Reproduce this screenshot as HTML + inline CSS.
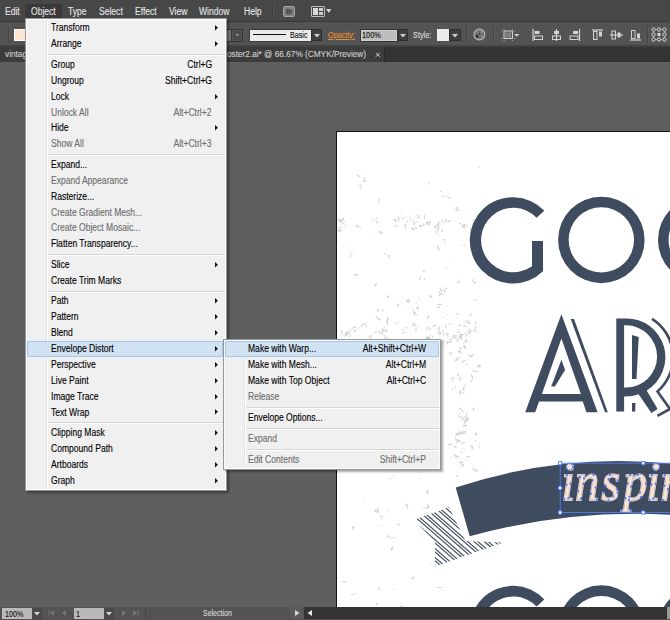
<!DOCTYPE html><html><head><meta charset="utf-8"><style>
html,body{margin:0;padding:0;width:670px;height:620px;overflow:hidden;background:#5f5f5f}
body{position:relative;font-family:"Liberation Sans",sans-serif}
.t{position:absolute;white-space:nowrap}
.m{transform:scaleX(0.855);transform-origin:0 0;-webkit-text-stroke:0.12px currentColor}
.mr{transform-origin:100% 0}
.w{transform:scaleX(0.88)}
</style></head><body>
<div style="position:absolute;left:0;top:0;width:670px;height:21px;background:#474747"></div>
<div style="position:absolute;left:0;top:21px;width:670px;height:1px;background:#383838"></div>
<div style="position:absolute;left:0;top:22px;width:670px;height:24px;background:#535353"></div>
<div style="position:absolute;left:0;top:45px;width:670px;height:2px;background:#424242"></div>
<div style="position:absolute;left:0;top:47px;width:670px;height:15px;background:#333333"></div>
<div style="position:absolute;left:0;top:47px;width:384px;height:15px;background:#3c3c3c;border-right:1px solid #2a2a2a"></div>
<div style="position:absolute;left:0;top:62px;width:670px;height:545px;background:#5f5f5f"></div>
<div style="position:absolute;left:25px;top:4px;width:37px;height:14px;background:#393939;border-radius:2px"></div>
<div class="t m" style="left:4.6px;top:3.73px;font-size:10.0px;line-height:16px;color:#e4e4e4;">Edit</div>
<div class="t m" style="left:31px;top:3.73px;font-size:10.0px;line-height:16px;color:#e4e4e4;">Object</div>
<div class="t m" style="left:68.4px;top:3.73px;font-size:10.0px;line-height:16px;color:#e4e4e4;">Type</div>
<div class="t m" style="left:99.3px;top:3.73px;font-size:10.0px;line-height:16px;color:#e4e4e4;">Select</div>
<div class="t m" style="left:134.8px;top:3.73px;font-size:10.0px;line-height:16px;color:#e4e4e4;">Effect</div>
<div class="t m" style="left:168.6px;top:3.73px;font-size:10.0px;line-height:16px;color:#e4e4e4;">View</div>
<div class="t m" style="left:199.4px;top:3.73px;font-size:10.0px;line-height:16px;color:#e4e4e4;">Window</div>
<div class="t m" style="left:243.7px;top:3.73px;font-size:10.0px;line-height:16px;color:#e4e4e4;">Help</div>
<div style="position:absolute;left:272px;top:4px;width:1px;height:14px;background:#3a3a3a;border-right:1px solid #555"></div>
<div style="position:absolute;left:283px;top:5.5px;width:12px;height:11.5px;background:#808080;border:1px solid #a5a5a5;box-sizing:border-box;border-radius:1.5px"></div>
<div class="t m" style="left:285.6px;top:3.64px;font-size:7.4px;line-height:16px;color:#262626;">Br</div>
<div style="position:absolute;left:311px;top:6px;width:14px;height:11px;border:1px solid #bdbdbd;box-sizing:border-box;background:#4a4a4a;border-radius:1px"></div>
<div style="position:absolute;left:313px;top:8px;width:5px;height:7px;background:#d9d9d9"></div>
<div style="position:absolute;left:319px;top:8px;width:4px;height:3px;background:#cfcfcf"></div>
<div style="position:absolute;left:319px;top:12px;width:4px;height:3px;background:#cfcfcf"></div>
<svg style="position:absolute;left:325.7px;top:8.5px" width="6" height="5"><path d="M0 0H5.4L2.7 4Z" fill="#d6d6d6"/></svg>
<div style="position:absolute;left:8px;top:26px;width:1px;height:17px;background:#444;border-right:1px solid #5c5c5c"></div>
<div style="position:absolute;left:14px;top:29px;width:12px;height:12px;background:#fde5d2;box-shadow:0 0 0 1px #fff inset"></div>
<div style="position:absolute;left:226px;top:28.5px;width:17px;height:13px;background:#333"></div>
<div style="position:absolute;left:226px;top:29.5px;width:5px;height:11px;background:#787878"></div>
<div style="position:absolute;left:231.5px;top:29.5px;width:10.5px;height:11px;background:#494949;border:1px solid #555;box-sizing:border-box"></div>
<svg style="position:absolute;left:234.5px;top:33.5px" width="6" height="4"><path d="M0 0H4.6L2.3 2.6Z" fill="#8a8a8a"/></svg>
<div style="position:absolute;left:248.5px;top:28.5px;width:63px;height:13px;background:#ebebeb;border:1px solid #3a3a3a;box-sizing:border-box"></div>
<div style="position:absolute;left:253px;top:34.2px;width:33px;height:1.3px;background:#111"></div>
<div class="t m" style="left:289.6px;top:27.09px;font-size:8.4px;line-height:16px;color:#111;">Basic</div>
<div style="position:absolute;left:311px;top:29px;width:11px;height:12px;background:#3f3f3f;border:1px solid #2f2f2f;box-sizing:border-box"></div>
<svg style="position:absolute;left:313.5px;top:33.5px" width="6" height="4"><path d="M0 0H6L3 3.5Z" fill="#d0d0d0"/></svg>
<div class="t m" style="left:328.4px;top:26.72px;font-size:8.6px;line-height:16px;color:#e8913a;text-decoration:underline">Opacity:</div>
<div style="position:absolute;left:359.5px;top:28.5px;width:38.5px;height:13px;background:#bdbdbd;border:1px solid #333;box-shadow:inset 0 0 0 1px #d0d0d0;box-sizing:border-box"></div>
<div class="t m" style="left:362px;top:26.82px;font-size:8.6px;line-height:16px;color:#111;">100%</div>
<div style="position:absolute;left:398px;top:29px;width:10px;height:12px;background:#3f3f3f;border:1px solid #2f2f2f;box-sizing:border-box"></div>
<svg style="position:absolute;left:400px;top:33.5px" width="6" height="4"><path d="M0 0H6L3 3.5Z" fill="#d0d0d0"/></svg>
<div class="t m" style="left:413px;top:26.72px;font-size:8.6px;line-height:16px;color:#d8d8d8;">Style:</div>
<div style="position:absolute;left:436.5px;top:29px;width:12.5px;height:12px;background:#ececec"></div>
<div style="position:absolute;left:449px;top:29px;width:11.5px;height:12px;background:#3f3f3f;border:1px solid #2f2f2f;box-sizing:border-box"></div>
<svg style="position:absolute;left:452px;top:33.5px" width="6" height="4"><path d="M0 0H6L3 3.5Z" fill="#d0d0d0"/></svg>
<div style="position:absolute;left:466px;top:26px;width:1px;height:17px;background:#444;border-right:1px solid #5c5c5c"></div>
<svg style="position:absolute;left:472px;top:28px" width="15" height="14"><circle cx="7.4" cy="6.5" r="5.4" fill="#707070" stroke="#bdbdbd" stroke-width="1.1"/><circle cx="5" cy="8.3" r="1.4" fill="#222"/><circle cx="7.6" cy="5.8" r="0.7" fill="#111"/><circle cx="9.5" cy="4" r="1" fill="#9a9a9a"/><circle cx="5" cy="4" r="0.8" fill="#9a9a9a"/><circle cx="10" cy="8.5" r="0.9" fill="#9a9a9a"/></svg>
<div style="position:absolute;left:493px;top:26px;width:1px;height:17px;background:#444;border-right:1px solid #5c5c5c"></div>
<svg style="position:absolute;left:501px;top:28px" width="20" height="14"><rect x="3" y="3" width="8.5" height="7.5" fill="#5a5a5a" stroke="#cfcfcf" stroke-width="1"/><rect x="4.5" y="4.5" width="2" height="2" fill="#999"/><rect x="8" y="4.5" width="2" height="2" fill="#999"/><rect x="4.5" y="7.5" width="2" height="2" fill="#999"/><rect x="8" y="7.5" width="2" height="2" fill="#999"/><rect x="6.3" y="6" width="2" height="2" fill="#888"/><circle cx="3" cy="1" r="0.6" fill="#aaa"/><circle cx="11.5" cy="1" r="0.6" fill="#aaa"/><circle cx="3" cy="12.5" r="0.6" fill="#aaa"/><circle cx="11.5" cy="12.5" r="0.6" fill="#aaa"/><circle cx="1" cy="3" r="0.6" fill="#aaa"/><circle cx="13.5" cy="3" r="0.6" fill="#aaa"/><circle cx="1" cy="10.5" r="0.6" fill="#aaa"/><circle cx="13.5" cy="10.5" r="0.6" fill="#aaa"/><path d="M13 6H18.4L15.7 8.8Z" fill="#d0d0d0"/></svg>
<svg style="position:absolute;left:531.5px;top:28.5px" width="12" height="12"><path d="M1 0V12" stroke="#d4d4d4" stroke-width="1.2"/><rect x="2.5" y="2" width="5" height="3" fill="#d4d4d4"/><rect x="2.5" y="7" width="8" height="3.5" fill="none" stroke="#d4d4d4"/></svg>
<svg style="position:absolute;left:550.5px;top:28.5px" width="12" height="12"><path d="M5.5 0V12" stroke="#d4d4d4" stroke-width="1.2"/><rect x="3" y="2" width="5" height="3" fill="#d4d4d4"/><rect x="1.5" y="7" width="8" height="3.5" fill="none" stroke="#d4d4d4"/></svg>
<svg style="position:absolute;left:568.5px;top:28.5px" width="12" height="12"><path d="M10.5 0V12" stroke="#d4d4d4" stroke-width="1.2"/><rect x="4" y="2" width="5" height="3" fill="#d4d4d4"/><rect x="1" y="7" width="8" height="3.5" fill="none" stroke="#d4d4d4"/></svg>
<svg style="position:absolute;left:592px;top:28.5px" width="12" height="12"><path d="M0 1H11" stroke="#d4d4d4" stroke-width="1.2"/><rect x="1.5" y="2.5" width="3.5" height="8" fill="none" stroke="#d4d4d4"/><rect x="7" y="2.5" width="3" height="5" fill="#d4d4d4"/></svg>
<svg style="position:absolute;left:610px;top:28.5px" width="13" height="12"><path d="M0 6H13" stroke="#d4d4d4" stroke-width="1.2"/><rect x="2" y="2" width="3.5" height="8" fill="none" stroke="#d4d4d4"/><rect x="7.5" y="3.5" width="3" height="5" fill="#d4d4d4"/></svg>
<svg style="position:absolute;left:629.5px;top:28.5px" width="12" height="12"><path d="M0 11H11" stroke="#d4d4d4" stroke-width="1.2"/><rect x="1.5" y="1.5" width="3.5" height="8" fill="none" stroke="#d4d4d4"/><rect x="7" y="4.5" width="3" height="5" fill="#d4d4d4"/></svg>
<div style="position:absolute;left:647px;top:26px;width:1px;height:17px;background:#444;border-right:1px solid #5c5c5c"></div>
<svg style="position:absolute;left:651px;top:27px" width="17" height="15"><rect x="2.5" y="2.5" width="11" height="10" fill="none" stroke="#9a9a9a" stroke-width="1"/><circle cx="2.5" cy="2.5" r="1.7" fill="#555" stroke="#d4d4d4" stroke-width="1"/><circle cx="2.5" cy="7.5" r="1.7" fill="#555" stroke="#d4d4d4" stroke-width="1"/><circle cx="2.5" cy="12.5" r="1.7" fill="#555" stroke="#d4d4d4" stroke-width="1"/><circle cx="8" cy="2.5" r="1.7" fill="#555" stroke="#d4d4d4" stroke-width="1"/><rect x="6.5" y="6" width="3" height="3" fill="#d8d8d8"/><circle cx="8" cy="12.5" r="1.7" fill="#555" stroke="#d4d4d4" stroke-width="1"/><circle cx="13.5" cy="2.5" r="1.7" fill="#555" stroke="#d4d4d4" stroke-width="1"/><circle cx="13.5" cy="7.5" r="1.7" fill="#555" stroke="#d4d4d4" stroke-width="1"/><circle cx="13.5" cy="12.5" r="1.7" fill="#555" stroke="#d4d4d4" stroke-width="1"/></svg>
<div class="t m w" style="left:4.6px;top:46.24px;font-size:9.4px;line-height:16px;color:#d0d0d0;">vintage</div>
<div class="t m mr w" style="right:303.5px;top:46.24px;font-size:9.4px;line-height:16px;color:#d0d0d0;">oster2.ai* @ 66.67% (CMYK/Preview)</div>
<svg style="position:absolute;left:374.5px;top:52px" width="6" height="6"><path d="M0.8 0.8L4.8 4.8M4.8 0.8L0.8 4.8" stroke="#d0d0d0" stroke-width="1.0"/></svg>
<div style="position:absolute;left:336px;top:131px;width:334px;height:476px;background:#fff;border-left:1px solid #111;border-top:1px solid #111;box-sizing:border-box;overflow:hidden">
<svg style="position:absolute;left:-337px;top:-132px" width="670" height="620" viewBox="0 0 670 620"><defs><pattern id="hatch" patternUnits="userSpaceOnUse" width="7.7" height="7.7" patternTransform="rotate(40)"><rect x="0" y="0" width="7.7" height="1.0" fill="#3f4b5e"/><rect x="0" y="3.2" width="7.7" height="1.0" fill="#3f4b5e"/></pattern></defs><g fill="#d0d0d0"><ellipse cx="427.9" cy="493.0" rx="2.0" ry="0.4" transform="rotate(110 427.9 493.0)"/><ellipse cx="427.4" cy="491.5" rx="1.5" ry="0.7" transform="rotate(124 427.4 491.5)"/><ellipse cx="427.5" cy="490.9" rx="1.5" ry="0.7" transform="rotate(100 427.5 490.9)"/><ellipse cx="474.6" cy="492.7" rx="1.2" ry="0.5" transform="rotate(172 474.6 492.7)"/><ellipse cx="474.1" cy="494.1" rx="0.7" ry="0.5" transform="rotate(52 474.1 494.1)"/><ellipse cx="474.1" cy="494.1" rx="1.5" ry="0.7" transform="rotate(155 474.1 494.1)"/><ellipse cx="342.6" cy="372.0" rx="0.5" ry="0.5" transform="rotate(167 342.6 372.0)"/><ellipse cx="430.9" cy="563.2" rx="0.5" ry="0.7" transform="rotate(173 430.9 563.2)"/><ellipse cx="392.0" cy="548.5" rx="2.5" ry="0.7" transform="rotate(109 392.0 548.5)"/><ellipse cx="393.0" cy="547.6" rx="0.5" ry="0.4" transform="rotate(43 393.0 547.6)"/><ellipse cx="415.6" cy="420.2" rx="1.2" ry="0.4" transform="rotate(121 415.6 420.2)"/><ellipse cx="443.0" cy="344.0" rx="1.5" ry="0.4" transform="rotate(164 443.0 344.0)"/><ellipse cx="471.8" cy="502.6" rx="0.5" ry="0.7" transform="rotate(160 471.8 502.6)"/><ellipse cx="446.7" cy="195.5" rx="0.7" ry="0.4" transform="rotate(38 446.7 195.5)"/><ellipse cx="443.5" cy="196.5" rx="1.5" ry="0.4" transform="rotate(162 443.5 196.5)"/><ellipse cx="448.9" cy="197.6" rx="2.5" ry="0.4" transform="rotate(40 448.9 197.6)"/><ellipse cx="428.9" cy="222.4" rx="2.5" ry="0.7" transform="rotate(158 428.9 222.4)"/><ellipse cx="478.8" cy="167.2" rx="1.2" ry="0.5" transform="rotate(95 478.8 167.2)"/><ellipse cx="474.6" cy="239.1" rx="0.9" ry="0.4" transform="rotate(109 474.6 239.1)"/><ellipse cx="378.9" cy="590.7" rx="0.5" ry="0.4" transform="rotate(21 378.9 590.7)"/><ellipse cx="379.4" cy="588.5" rx="0.7" ry="0.5" transform="rotate(34 379.4 588.5)"/><ellipse cx="378.8" cy="588.5" rx="2.0" ry="0.5" transform="rotate(131 378.8 588.5)"/><ellipse cx="462.9" cy="442.9" rx="2.5" ry="0.7" transform="rotate(172 462.9 442.9)"/><ellipse cx="474.2" cy="469.3" rx="2.0" ry="0.5" transform="rotate(167 474.2 469.3)"/><ellipse cx="476.3" cy="470.5" rx="2.5" ry="0.5" transform="rotate(151 476.3 470.5)"/><ellipse cx="383.5" cy="326.4" rx="0.5" ry="0.4" transform="rotate(60 383.5 326.4)"/><ellipse cx="472.8" cy="280.2" rx="1.5" ry="0.5" transform="rotate(133 472.8 280.2)"/><ellipse cx="474.8" cy="282.5" rx="2.0" ry="0.7" transform="rotate(172 474.8 282.5)"/><ellipse cx="378.8" cy="429.4" rx="0.5" ry="0.5" transform="rotate(19 378.8 429.4)"/><ellipse cx="420.9" cy="478.5" rx="0.9" ry="0.4" transform="rotate(83 420.9 478.5)"/><ellipse cx="383.1" cy="525.9" rx="0.5" ry="0.4" transform="rotate(73 383.1 525.9)"/><ellipse cx="380.2" cy="525.7" rx="0.5" ry="0.7" transform="rotate(173 380.2 525.7)"/><ellipse cx="437.9" cy="246.7" rx="1.2" ry="0.5" transform="rotate(170 437.9 246.7)"/><ellipse cx="438.4" cy="248.5" rx="2.0" ry="0.7" transform="rotate(53 438.4 248.5)"/><ellipse cx="440.7" cy="191.2" rx="0.9" ry="0.7" transform="rotate(35 440.7 191.2)"/><ellipse cx="475.9" cy="322.7" rx="1.2" ry="0.7" transform="rotate(125 475.9 322.7)"/><ellipse cx="475.4" cy="323.5" rx="0.9" ry="0.5" transform="rotate(61 475.4 323.5)"/><ellipse cx="338.6" cy="514.0" rx="0.5" ry="0.4" transform="rotate(76 338.6 514.0)"/><ellipse cx="339.0" cy="513.3" rx="0.5" ry="0.4" transform="rotate(49 339.0 513.3)"/><ellipse cx="394.6" cy="538.0" rx="0.7" ry="0.7" transform="rotate(152 394.6 538.0)"/><ellipse cx="393.2" cy="537.4" rx="1.2" ry="0.5" transform="rotate(23 393.2 537.4)"/><ellipse cx="343.8" cy="246.9" rx="0.7" ry="0.5" transform="rotate(146 343.8 246.9)"/><ellipse cx="356.6" cy="275.3" rx="1.2" ry="0.7" transform="rotate(14 356.6 275.3)"/><ellipse cx="355.4" cy="274.5" rx="2.5" ry="0.5" transform="rotate(2 355.4 274.5)"/><ellipse cx="387.4" cy="318.8" rx="1.5" ry="0.7" transform="rotate(85 387.4 318.8)"/><ellipse cx="387.1" cy="322.5" rx="2.5" ry="0.7" transform="rotate(78 387.1 322.5)"/><ellipse cx="387.7" cy="319.7" rx="2.0" ry="0.7" transform="rotate(114 387.7 319.7)"/><ellipse cx="372.2" cy="369.8" rx="2.5" ry="0.7" transform="rotate(74 372.2 369.8)"/><ellipse cx="374.2" cy="371.2" rx="1.2" ry="0.4" transform="rotate(180 374.2 371.2)"/><ellipse cx="372.0" cy="369.7" rx="0.7" ry="0.5" transform="rotate(141 372.0 369.7)"/><ellipse cx="442.4" cy="514.5" rx="0.9" ry="0.4" transform="rotate(71 442.4 514.5)"/><ellipse cx="447.8" cy="517.6" rx="0.9" ry="0.5" transform="rotate(0 447.8 517.6)"/><ellipse cx="344.1" cy="581.7" rx="2.5" ry="0.5" transform="rotate(14 344.1 581.7)"/><ellipse cx="366.0" cy="391.6" rx="1.2" ry="0.4" transform="rotate(35 366.0 391.6)"/><ellipse cx="367.6" cy="393.9" rx="0.9" ry="0.7" transform="rotate(82 367.6 393.9)"/><ellipse cx="470.6" cy="314.8" rx="0.9" ry="0.7" transform="rotate(6 470.6 314.8)"/><ellipse cx="470.3" cy="315.8" rx="0.9" ry="0.4" transform="rotate(136 470.3 315.8)"/><ellipse cx="471.8" cy="313.8" rx="0.7" ry="0.5" transform="rotate(93 471.8 313.8)"/><ellipse cx="418.5" cy="304.9" rx="0.5" ry="0.5" transform="rotate(20 418.5 304.9)"/><ellipse cx="416.1" cy="302.4" rx="0.9" ry="0.5" transform="rotate(99 416.1 302.4)"/><ellipse cx="380.9" cy="515.8" rx="1.5" ry="0.4" transform="rotate(47 380.9 515.8)"/><ellipse cx="383.2" cy="516.2" rx="0.7" ry="0.4" transform="rotate(87 383.2 516.2)"/><ellipse cx="381.4" cy="518.0" rx="2.5" ry="0.4" transform="rotate(75 381.4 518.0)"/><ellipse cx="359.2" cy="468.0" rx="2.5" ry="0.5" transform="rotate(10 359.2 468.0)"/><ellipse cx="359.4" cy="469.3" rx="1.2" ry="0.5" transform="rotate(140 359.4 469.3)"/><ellipse cx="361.3" cy="185.3" rx="0.5" ry="0.7" transform="rotate(22 361.3 185.3)"/><ellipse cx="360.6" cy="187.8" rx="0.9" ry="0.7" transform="rotate(105 360.6 187.8)"/><ellipse cx="360.1" cy="185.5" rx="1.2" ry="0.5" transform="rotate(152 360.1 185.5)"/><ellipse cx="413.9" cy="342.9" rx="2.0" ry="0.5" transform="rotate(10 413.9 342.9)"/><ellipse cx="443.3" cy="317.4" rx="0.5" ry="0.7" transform="rotate(54 443.3 317.4)"/><ellipse cx="446.8" cy="314.8" rx="0.7" ry="0.5" transform="rotate(63 446.8 314.8)"/><ellipse cx="402.7" cy="349.9" rx="0.7" ry="0.7" transform="rotate(82 402.7 349.9)"/><ellipse cx="479.1" cy="447.6" rx="0.9" ry="0.4" transform="rotate(67 479.1 447.6)"/><ellipse cx="479.2" cy="445.9" rx="1.2" ry="0.4" transform="rotate(133 479.2 445.9)"/><ellipse cx="388.6" cy="256.3" rx="2.0" ry="0.5" transform="rotate(70 388.6 256.3)"/><ellipse cx="389.1" cy="255.9" rx="0.9" ry="0.7" transform="rotate(158 389.1 255.9)"/><ellipse cx="385.3" cy="254.1" rx="0.7" ry="0.7" transform="rotate(25 385.3 254.1)"/><ellipse cx="420.5" cy="225.6" rx="1.5" ry="0.4" transform="rotate(2 420.5 225.6)"/><ellipse cx="420.1" cy="225.8" rx="1.2" ry="0.7" transform="rotate(157 420.1 225.8)"/><ellipse cx="354.2" cy="358.6" rx="0.5" ry="0.5" transform="rotate(130 354.2 358.6)"/><ellipse cx="347.0" cy="349.7" rx="0.7" ry="0.7" transform="rotate(171 347.0 349.7)"/><ellipse cx="401.8" cy="607.0" rx="2.0" ry="0.7" transform="rotate(17 401.8 607.0)"/><ellipse cx="478.9" cy="366.7" rx="2.0" ry="0.7" transform="rotate(161 478.9 366.7)"/><ellipse cx="479.3" cy="365.4" rx="2.0" ry="0.7" transform="rotate(152 479.3 365.4)"/><ellipse cx="436.6" cy="306.9" rx="0.9" ry="0.5" transform="rotate(54 436.6 306.9)"/><ellipse cx="439.0" cy="307.4" rx="1.5" ry="0.7" transform="rotate(162 439.0 307.4)"/><ellipse cx="379.9" cy="342.8" rx="0.7" ry="0.5" transform="rotate(57 379.9 342.8)"/><ellipse cx="354.4" cy="527.3" rx="0.7" ry="0.5" transform="rotate(179 354.4 527.3)"/><ellipse cx="353.1" cy="527.5" rx="1.5" ry="0.7" transform="rotate(71 353.1 527.5)"/><ellipse cx="352.9" cy="529.2" rx="0.7" ry="0.7" transform="rotate(90 352.9 529.2)"/><ellipse cx="479.6" cy="443.1" rx="0.5" ry="0.4" transform="rotate(78 479.6 443.1)"/><ellipse cx="475.6" cy="440.8" rx="0.7" ry="0.7" transform="rotate(43 475.6 440.8)"/><ellipse cx="462.2" cy="245.4" rx="0.9" ry="0.5" transform="rotate(53 462.2 245.4)"/><ellipse cx="464.7" cy="245.3" rx="0.9" ry="0.7" transform="rotate(48 464.7 245.3)"/><ellipse cx="378.0" cy="509.5" rx="2.5" ry="0.4" transform="rotate(124 378.0 509.5)"/><ellipse cx="375.6" cy="511.1" rx="2.5" ry="0.7" transform="rotate(51 375.6 511.1)"/><ellipse cx="377.7" cy="510.7" rx="2.5" ry="0.7" transform="rotate(69 377.7 510.7)"/><ellipse cx="389.0" cy="511.2" rx="0.9" ry="0.4" transform="rotate(74 389.0 511.2)"/><ellipse cx="388.1" cy="512.2" rx="0.5" ry="0.5" transform="rotate(129 388.1 512.2)"/><ellipse cx="438.7" cy="456.4" rx="0.5" ry="0.4" transform="rotate(54 438.7 456.4)"/><ellipse cx="439.7" cy="459.7" rx="2.5" ry="0.7" transform="rotate(161 439.7 459.7)"/><ellipse cx="393.8" cy="475.8" rx="1.2" ry="0.4" transform="rotate(41 393.8 475.8)"/><ellipse cx="390.3" cy="477.9" rx="0.9" ry="0.7" transform="rotate(19 390.3 477.9)"/><ellipse cx="458.6" cy="279.3" rx="0.5" ry="0.5" transform="rotate(68 458.6 279.3)"/><ellipse cx="458.0" cy="282.5" rx="1.5" ry="0.7" transform="rotate(17 458.0 282.5)"/><ellipse cx="459.3" cy="281.1" rx="1.2" ry="0.5" transform="rotate(21 459.3 281.1)"/><ellipse cx="439.2" cy="587.5" rx="2.5" ry="0.5" transform="rotate(7 439.2 587.5)"/><ellipse cx="442.8" cy="590.4" rx="0.7" ry="0.5" transform="rotate(118 442.8 590.4)"/><ellipse cx="428.5" cy="422.0" rx="2.5" ry="0.7" transform="rotate(95 428.5 422.0)"/><ellipse cx="407.2" cy="507.2" rx="2.0" ry="0.5" transform="rotate(55 407.2 507.2)"/><ellipse cx="406.7" cy="505.0" rx="2.0" ry="0.7" transform="rotate(46 406.7 505.0)"/><ellipse cx="433.8" cy="370.5" rx="1.2" ry="0.5" transform="rotate(73 433.8 370.5)"/><ellipse cx="436.7" cy="369.5" rx="1.5" ry="0.4" transform="rotate(82 436.7 369.5)"/><ellipse cx="434.0" cy="371.6" rx="1.2" ry="0.4" transform="rotate(24 434.0 371.6)"/><ellipse cx="430.4" cy="517.8" rx="1.2" ry="0.5" transform="rotate(112 430.4 517.8)"/><ellipse cx="431.8" cy="518.0" rx="2.0" ry="0.5" transform="rotate(19 431.8 518.0)"/><ellipse cx="376.7" cy="316.9" rx="0.9" ry="0.7" transform="rotate(9 376.7 316.9)"/><ellipse cx="376.8" cy="317.6" rx="2.5" ry="0.4" transform="rotate(61 376.8 317.6)"/><ellipse cx="387.6" cy="536.1" rx="1.2" ry="0.7" transform="rotate(166 387.6 536.1)"/><ellipse cx="387.2" cy="537.3" rx="0.9" ry="0.4" transform="rotate(94 387.2 537.3)"/><ellipse cx="389.8" cy="537.2" rx="2.5" ry="0.4" transform="rotate(52 389.8 537.2)"/><ellipse cx="404.2" cy="327.0" rx="0.5" ry="0.4" transform="rotate(88 404.2 327.0)"/><ellipse cx="406.5" cy="327.7" rx="1.2" ry="0.7" transform="rotate(51 406.5 327.7)"/><ellipse cx="416.1" cy="399.7" rx="1.2" ry="0.5" transform="rotate(165 416.1 399.7)"/><ellipse cx="364.7" cy="324.0" rx="2.0" ry="0.7" transform="rotate(142 364.7 324.0)"/><ellipse cx="366.4" cy="326.6" rx="2.0" ry="0.4" transform="rotate(97 366.4 326.6)"/><ellipse cx="378.9" cy="198.5" rx="0.9" ry="0.4" transform="rotate(41 378.9 198.5)"/><ellipse cx="378.9" cy="203.0" rx="2.0" ry="0.4" transform="rotate(30 378.9 203.0)"/><ellipse cx="378.8" cy="200.5" rx="2.0" ry="0.5" transform="rotate(117 378.8 200.5)"/><ellipse cx="444.8" cy="239.7" rx="0.7" ry="0.7" transform="rotate(49 444.8 239.7)"/><ellipse cx="444.7" cy="242.7" rx="1.5" ry="0.4" transform="rotate(134 444.7 242.7)"/><ellipse cx="443.3" cy="239.7" rx="0.9" ry="0.4" transform="rotate(132 443.3 239.7)"/><ellipse cx="412.3" cy="577.8" rx="2.5" ry="0.5" transform="rotate(141 412.3 577.8)"/><ellipse cx="413.9" cy="578.5" rx="1.5" ry="0.4" transform="rotate(27 413.9 578.5)"/><ellipse cx="424.5" cy="507.6" rx="2.5" ry="0.4" transform="rotate(19 424.5 507.6)"/><ellipse cx="427.9" cy="506.2" rx="2.5" ry="0.5" transform="rotate(86 427.9 506.2)"/><ellipse cx="428.3" cy="507.2" rx="2.5" ry="0.7" transform="rotate(138 428.3 507.2)"/><ellipse cx="376.9" cy="603.6" rx="1.5" ry="0.7" transform="rotate(129 376.9 603.6)"/><ellipse cx="358.9" cy="360.9" rx="0.5" ry="0.7" transform="rotate(159 358.9 360.9)"/><ellipse cx="359.3" cy="360.8" rx="0.5" ry="0.7" transform="rotate(61 359.3 360.8)"/><ellipse cx="361.0" cy="360.9" rx="0.5" ry="0.4" transform="rotate(40 361.0 360.9)"/><ellipse cx="364.9" cy="501.7" rx="0.9" ry="0.4" transform="rotate(131 364.9 501.7)"/><ellipse cx="428.9" cy="182.9" rx="0.5" ry="0.5" transform="rotate(124 428.9 182.9)"/><ellipse cx="429.5" cy="183.8" rx="1.2" ry="0.4" transform="rotate(74 429.5 183.8)"/><ellipse cx="480.7" cy="239.6" rx="2.5" ry="0.4" transform="rotate(125 480.7 239.6)"/><ellipse cx="354.2" cy="594.0" rx="2.5" ry="0.4" transform="rotate(157 354.2 594.0)"/><ellipse cx="352.1" cy="594.7" rx="1.2" ry="0.7" transform="rotate(162 352.1 594.7)"/><ellipse cx="364.4" cy="178.7" rx="2.0" ry="0.5" transform="rotate(132 364.4 178.7)"/><ellipse cx="364.7" cy="181.2" rx="2.0" ry="0.7" transform="rotate(156 364.7 181.2)"/><ellipse cx="390.6" cy="460.0" rx="2.5" ry="0.4" transform="rotate(66 390.6 460.0)"/><ellipse cx="423.8" cy="271.5" rx="0.9" ry="0.4" transform="rotate(113 423.8 271.5)"/><ellipse cx="424.2" cy="270.8" rx="2.0" ry="0.5" transform="rotate(171 424.2 270.8)"/><ellipse cx="339.9" cy="344.1" rx="1.2" ry="0.5" transform="rotate(131 339.9 344.1)"/><ellipse cx="335.6" cy="345.2" rx="0.9" ry="0.4" transform="rotate(178 335.6 345.2)"/><ellipse cx="460.0" cy="547.8" rx="1.2" ry="0.5" transform="rotate(145 460.0 547.8)"/><ellipse cx="459.7" cy="545.4" rx="1.5" ry="0.7" transform="rotate(74 459.7 545.4)"/><ellipse cx="462.3" cy="546.7" rx="2.5" ry="0.4" transform="rotate(41 462.3 546.7)"/><ellipse cx="459.0" cy="329.6" rx="0.5" ry="0.7" transform="rotate(87 459.0 329.6)"/><ellipse cx="420.0" cy="299.7" rx="0.9" ry="0.4" transform="rotate(15 420.0 299.7)"/><ellipse cx="418.4" cy="297.9" rx="0.9" ry="0.4" transform="rotate(56 418.4 297.9)"/><ellipse cx="417.4" cy="314.7" rx="1.5" ry="0.4" transform="rotate(138 417.4 314.7)"/><ellipse cx="415.8" cy="316.3" rx="0.5" ry="0.4" transform="rotate(88 415.8 316.3)"/><ellipse cx="414.8" cy="315.6" rx="0.9" ry="0.4" transform="rotate(76 414.8 315.6)"/><ellipse cx="379.5" cy="319.2" rx="2.0" ry="0.7" transform="rotate(44 379.5 319.2)"/><ellipse cx="397.0" cy="524.2" rx="0.9" ry="0.4" transform="rotate(168 397.0 524.2)"/><ellipse cx="399.0" cy="524.2" rx="0.9" ry="0.7" transform="rotate(170 399.0 524.2)"/><ellipse cx="399.0" cy="525.3" rx="0.7" ry="0.5" transform="rotate(123 399.0 525.3)"/><ellipse cx="416.3" cy="371.1" rx="2.5" ry="0.5" transform="rotate(59 416.3 371.1)"/><ellipse cx="424.0" cy="413.7" rx="2.5" ry="0.4" transform="rotate(107 424.0 413.7)"/><ellipse cx="475.8" cy="434.8" rx="1.2" ry="0.7" transform="rotate(95 475.8 434.8)"/><ellipse cx="476.5" cy="433.5" rx="1.5" ry="0.7" transform="rotate(159 476.5 433.5)"/><ellipse cx="456.2" cy="456.8" rx="2.0" ry="0.5" transform="rotate(168 456.2 456.8)"/><ellipse cx="456.8" cy="457.8" rx="0.9" ry="0.4" transform="rotate(55 456.8 457.8)"/><ellipse cx="353.9" cy="414.0" rx="1.5" ry="0.4" transform="rotate(32 353.9 414.0)"/><ellipse cx="355.2" cy="413.2" rx="0.5" ry="0.7" transform="rotate(20 355.2 413.2)"/><ellipse cx="354.4" cy="415.2" rx="0.5" ry="0.4" transform="rotate(53 354.4 415.2)"/><ellipse cx="412.2" cy="308.5" rx="0.7" ry="0.4" transform="rotate(78 412.2 308.5)"/><ellipse cx="417.3" cy="308.3" rx="1.5" ry="0.7" transform="rotate(179 417.3 308.3)"/><ellipse cx="418.0" cy="307.7" rx="1.2" ry="0.7" transform="rotate(83 418.0 307.7)"/><ellipse cx="391.5" cy="356.9" rx="0.9" ry="0.7" transform="rotate(16 391.5 356.9)"/><ellipse cx="409.4" cy="376.1" rx="2.5" ry="0.5" transform="rotate(170 409.4 376.1)"/><ellipse cx="409.5" cy="378.1" rx="2.5" ry="0.5" transform="rotate(179 409.5 378.1)"/><ellipse cx="408.5" cy="378.3" rx="2.0" ry="0.7" transform="rotate(82 408.5 378.3)"/><ellipse cx="394.6" cy="589.7" rx="1.2" ry="0.4" transform="rotate(168 394.6 589.7)"/><ellipse cx="424.8" cy="279.1" rx="1.5" ry="0.4" transform="rotate(79 424.8 279.1)"/><ellipse cx="424.5" cy="278.8" rx="0.9" ry="0.5" transform="rotate(6 424.5 278.8)"/><ellipse cx="408.3" cy="349.4" rx="0.7" ry="0.7" transform="rotate(90 408.3 349.4)"/><ellipse cx="407.3" cy="347.4" rx="0.5" ry="0.7" transform="rotate(55 407.3 347.4)"/><ellipse cx="473.2" cy="300.0" rx="0.7" ry="0.4" transform="rotate(8 473.2 300.0)"/><ellipse cx="476.0" cy="300.0" rx="1.5" ry="0.4" transform="rotate(8 476.0 300.0)"/><ellipse cx="358.6" cy="176.1" rx="2.5" ry="0.5" transform="rotate(40 358.6 176.1)"/><ellipse cx="363.4" cy="175.2" rx="0.5" ry="0.4" transform="rotate(20 363.4 175.2)"/><ellipse cx="358.7" cy="175.3" rx="0.5" ry="0.7" transform="rotate(20 358.7 175.3)"/><ellipse cx="426.8" cy="363.0" rx="2.5" ry="0.5" transform="rotate(141 426.8 363.0)"/><ellipse cx="427.4" cy="361.0" rx="0.9" ry="0.5" transform="rotate(12 427.4 361.0)"/><ellipse cx="344.7" cy="226.2" rx="1.2" ry="0.4" transform="rotate(138 344.7 226.2)"/><ellipse cx="346.0" cy="224.4" rx="0.5" ry="0.7" transform="rotate(134 346.0 224.4)"/><ellipse cx="340.1" cy="400.5" rx="0.7" ry="0.5" transform="rotate(120 340.1 400.5)"/><ellipse cx="336.1" cy="401.5" rx="2.0" ry="0.5" transform="rotate(1 336.1 401.5)"/><ellipse cx="374.1" cy="375.8" rx="0.7" ry="0.5" transform="rotate(66 374.1 375.8)"/><ellipse cx="375.5" cy="284.7" rx="2.5" ry="0.7" transform="rotate(134 375.5 284.7)"/><ellipse cx="441.4" cy="290.4" rx="1.2" ry="0.5" transform="rotate(57 441.4 290.4)"/><ellipse cx="441.1" cy="289.7" rx="2.5" ry="0.7" transform="rotate(53 441.1 289.7)"/><ellipse cx="423.2" cy="374.9" rx="1.5" ry="0.4" transform="rotate(41 423.2 374.9)"/><ellipse cx="425.7" cy="375.8" rx="0.7" ry="0.4" transform="rotate(37 425.7 375.8)"/><ellipse cx="425.6" cy="374.0" rx="0.9" ry="0.7" transform="rotate(25 425.6 374.0)"/><ellipse cx="460.5" cy="554.3" rx="1.5" ry="0.7" transform="rotate(111 460.5 554.3)"/><ellipse cx="339.4" cy="221.6" rx="0.7" ry="0.5" transform="rotate(113 339.4 221.6)"/><ellipse cx="338.5" cy="220.5" rx="0.7" ry="0.7" transform="rotate(84 338.5 220.5)"/><ellipse cx="414.2" cy="313.1" rx="2.0" ry="0.7" transform="rotate(62 414.2 313.1)"/><ellipse cx="414.6" cy="312.1" rx="2.5" ry="0.4" transform="rotate(54 414.6 312.1)"/><ellipse cx="439.2" cy="226.0" rx="2.0" ry="0.5" transform="rotate(68 439.2 226.0)"/><ellipse cx="438.1" cy="228.7" rx="1.5" ry="0.7" transform="rotate(61 438.1 228.7)"/><ellipse cx="436.3" cy="228.0" rx="2.0" ry="0.4" transform="rotate(133 436.3 228.0)"/><ellipse cx="344.9" cy="221.2" rx="1.2" ry="0.4" transform="rotate(53 344.9 221.2)"/><ellipse cx="341.1" cy="223.9" rx="0.7" ry="0.5" transform="rotate(72 341.1 223.9)"/><ellipse cx="343.3" cy="223.3" rx="0.9" ry="0.5" transform="rotate(125 343.3 223.3)"/><ellipse cx="342.7" cy="222.8" rx="0.7" ry="0.5" transform="rotate(145 342.7 222.8)"/><ellipse cx="414.1" cy="219.3" rx="0.5" ry="0.5" transform="rotate(71 414.1 219.3)"/><ellipse cx="416.4" cy="222.1" rx="2.0" ry="0.5" transform="rotate(169 416.4 222.1)"/><ellipse cx="414.1" cy="224.2" rx="1.2" ry="0.7" transform="rotate(108 414.1 224.2)"/><ellipse cx="341.8" cy="220.0" rx="0.9" ry="0.5" transform="rotate(91 341.8 220.0)"/><ellipse cx="342.6" cy="219.9" rx="2.5" ry="0.7" transform="rotate(122 342.6 219.9)"/><ellipse cx="341.5" cy="220.0" rx="2.5" ry="0.7" transform="rotate(154 341.5 220.0)"/><ellipse cx="341.4" cy="220.7" rx="2.5" ry="0.7" transform="rotate(119 341.4 220.7)"/><ellipse cx="339.1" cy="218.7" rx="1.2" ry="0.5" transform="rotate(86 339.1 218.7)"/><ellipse cx="424.5" cy="216.9" rx="2.5" ry="0.5" transform="rotate(87 424.5 216.9)"/><ellipse cx="419.3" cy="214.8" rx="0.7" ry="0.4" transform="rotate(58 419.3 214.8)"/><ellipse cx="420.2" cy="215.8" rx="0.5" ry="0.4" transform="rotate(140 420.2 215.8)"/><ellipse cx="416.2" cy="215.6" rx="2.5" ry="0.4" transform="rotate(155 416.2 215.6)"/><ellipse cx="418.5" cy="217.3" rx="1.5" ry="0.7" transform="rotate(126 418.5 217.3)"/><ellipse cx="458.0" cy="210.3" rx="2.5" ry="0.4" transform="rotate(152 458.0 210.3)"/><ellipse cx="455.8" cy="207.5" rx="0.5" ry="0.4" transform="rotate(60 455.8 207.5)"/><ellipse cx="456.9" cy="208.4" rx="2.0" ry="0.7" transform="rotate(115 456.9 208.4)"/><ellipse cx="454.5" cy="209.5" rx="0.7" ry="0.5" transform="rotate(92 454.5 209.5)"/><ellipse cx="454.6" cy="209.7" rx="0.9" ry="0.4" transform="rotate(139 454.6 209.7)"/><ellipse cx="400.9" cy="217.9" rx="0.5" ry="0.4" transform="rotate(34 400.9 217.9)"/><ellipse cx="403.5" cy="218.9" rx="0.9" ry="0.4" transform="rotate(146 403.5 218.9)"/><ellipse cx="403.1" cy="218.1" rx="1.5" ry="0.5" transform="rotate(161 403.1 218.1)"/><ellipse cx="406.0" cy="217.0" rx="0.9" ry="0.4" transform="rotate(65 406.0 217.0)"/><ellipse cx="402.4" cy="213.9" rx="0.7" ry="0.4" transform="rotate(57 402.4 213.9)"/><ellipse cx="402.2" cy="213.6" rx="0.9" ry="0.4" transform="rotate(179 402.2 213.6)"/><ellipse cx="376.1" cy="233.6" rx="0.9" ry="0.4" transform="rotate(96 376.1 233.6)"/><ellipse cx="381.2" cy="232.2" rx="2.0" ry="0.4" transform="rotate(18 381.2 232.2)"/><ellipse cx="379.6" cy="232.2" rx="2.5" ry="0.4" transform="rotate(57 379.6 232.2)"/><ellipse cx="380.8" cy="232.8" rx="2.0" ry="0.5" transform="rotate(69 380.8 232.8)"/><ellipse cx="427.3" cy="223.9" rx="1.5" ry="0.7" transform="rotate(70 427.3 223.9)"/><ellipse cx="429.5" cy="222.7" rx="0.9" ry="0.5" transform="rotate(101 429.5 222.7)"/><ellipse cx="427.9" cy="223.4" rx="2.0" ry="0.4" transform="rotate(65 427.9 223.4)"/><ellipse cx="429.4" cy="224.6" rx="0.9" ry="0.4" transform="rotate(79 429.4 224.6)"/><ellipse cx="426.7" cy="222.4" rx="1.2" ry="0.5" transform="rotate(133 426.7 222.4)"/><ellipse cx="463.6" cy="226.8" rx="1.5" ry="0.4" transform="rotate(44 463.6 226.8)"/><ellipse cx="463.6" cy="225.8" rx="0.7" ry="0.7" transform="rotate(179 463.6 225.8)"/><ellipse cx="464.0" cy="225.2" rx="2.0" ry="0.7" transform="rotate(121 464.0 225.2)"/><ellipse cx="462.3" cy="225.1" rx="0.7" ry="0.7" transform="rotate(5 462.3 225.1)"/><ellipse cx="463.5" cy="227.2" rx="0.5" ry="0.7" transform="rotate(84 463.5 227.2)"/><ellipse cx="473.4" cy="225.0" rx="1.2" ry="0.5" transform="rotate(38 473.4 225.0)"/><ellipse cx="471.0" cy="228.2" rx="0.5" ry="0.5" transform="rotate(15 471.0 228.2)"/><ellipse cx="470.8" cy="228.6" rx="0.9" ry="0.7" transform="rotate(78 470.8 228.6)"/><ellipse cx="395.4" cy="219.5" rx="0.5" ry="0.7" transform="rotate(31 395.4 219.5)"/><ellipse cx="395.1" cy="220.3" rx="2.5" ry="0.7" transform="rotate(27 395.1 220.3)"/><ellipse cx="398.6" cy="219.1" rx="2.5" ry="0.7" transform="rotate(77 398.6 219.1)"/><ellipse cx="376.8" cy="222.0" rx="2.0" ry="0.5" transform="rotate(103 376.8 222.0)"/><ellipse cx="378.7" cy="222.4" rx="0.7" ry="0.5" transform="rotate(87 378.7 222.4)"/><ellipse cx="446.0" cy="222.1" rx="1.2" ry="0.5" transform="rotate(120 446.0 222.1)"/><ellipse cx="446.4" cy="220.2" rx="2.0" ry="0.4" transform="rotate(13 446.4 220.2)"/><ellipse cx="448.9" cy="221.0" rx="0.9" ry="0.7" transform="rotate(93 448.9 221.0)"/><ellipse cx="449.6" cy="221.2" rx="2.5" ry="0.4" transform="rotate(153 449.6 221.2)"/><ellipse cx="445.7" cy="220.4" rx="1.5" ry="0.5" transform="rotate(76 445.7 220.4)"/><ellipse cx="474.2" cy="221.3" rx="0.7" ry="0.7" transform="rotate(168 474.2 221.3)"/><ellipse cx="472.1" cy="223.3" rx="0.5" ry="0.4" transform="rotate(164 472.1 223.3)"/><ellipse cx="473.7" cy="219.5" rx="1.2" ry="0.7" transform="rotate(130 473.7 219.5)"/><ellipse cx="473.9" cy="220.1" rx="0.7" ry="0.5" transform="rotate(20 473.9 220.1)"/><ellipse cx="473.5" cy="223.7" rx="0.7" ry="0.5" transform="rotate(28 473.5 223.7)"/><ellipse cx="435.7" cy="231.9" rx="0.9" ry="0.5" transform="rotate(59 435.7 231.9)"/><ellipse cx="437.4" cy="233.3" rx="0.5" ry="0.5" transform="rotate(59 437.4 233.3)"/><ellipse cx="438.1" cy="234.2" rx="0.9" ry="0.4" transform="rotate(54 438.1 234.2)"/><ellipse cx="423.8" cy="224.4" rx="1.2" ry="0.7" transform="rotate(30 423.8 224.4)"/><ellipse cx="421.6" cy="225.9" rx="2.5" ry="0.5" transform="rotate(167 421.6 225.9)"/><ellipse cx="437.8" cy="224.2" rx="2.5" ry="0.7" transform="rotate(108 437.8 224.2)"/><ellipse cx="434.8" cy="226.9" rx="1.5" ry="0.4" transform="rotate(127 434.8 226.9)"/><ellipse cx="438.0" cy="223.6" rx="2.5" ry="0.4" transform="rotate(153 438.0 223.6)"/><ellipse cx="435.2" cy="226.3" rx="1.2" ry="0.7" transform="rotate(122 435.2 226.3)"/><ellipse cx="434.8" cy="226.9" rx="0.7" ry="0.7" transform="rotate(178 434.8 226.9)"/><ellipse cx="357.3" cy="226.4" rx="2.0" ry="0.5" transform="rotate(52 357.3 226.4)"/><ellipse cx="360.6" cy="227.0" rx="2.0" ry="0.4" transform="rotate(25 360.6 227.0)"/><ellipse cx="357.3" cy="226.2" rx="1.5" ry="0.5" transform="rotate(133 357.3 226.2)"/><ellipse cx="394.0" cy="226.0" rx="0.9" ry="0.4" transform="rotate(176 394.0 226.0)"/><ellipse cx="396.3" cy="225.7" rx="1.5" ry="0.7" transform="rotate(43 396.3 225.7)"/><ellipse cx="413.2" cy="229.6" rx="0.5" ry="0.7" transform="rotate(19 413.2 229.6)"/><ellipse cx="411.9" cy="227.7" rx="0.5" ry="0.5" transform="rotate(178 411.9 227.7)"/><ellipse cx="415.9" cy="227.8" rx="1.2" ry="0.7" transform="rotate(67 415.9 227.8)"/><ellipse cx="414.7" cy="229.2" rx="0.5" ry="0.7" transform="rotate(142 414.7 229.2)"/><ellipse cx="412.6" cy="228.6" rx="1.5" ry="0.7" transform="rotate(21 412.6 228.6)"/><ellipse cx="440.1" cy="221.9" rx="0.9" ry="0.5" transform="rotate(23 440.1 221.9)"/><ellipse cx="442.8" cy="221.3" rx="2.5" ry="0.4" transform="rotate(70 442.8 221.3)"/><ellipse cx="438.0" cy="231.0" rx="0.7" ry="0.7" transform="rotate(79 438.0 231.0)"/><ellipse cx="442.4" cy="231.4" rx="0.5" ry="0.7" transform="rotate(93 442.4 231.4)"/><ellipse cx="441.7" cy="230.1" rx="2.0" ry="0.4" transform="rotate(105 441.7 230.1)"/><ellipse cx="341.5" cy="230.8" rx="1.2" ry="0.5" transform="rotate(20 341.5 230.8)"/><ellipse cx="338.2" cy="230.5" rx="0.9" ry="0.7" transform="rotate(109 338.2 230.5)"/><ellipse cx="340.8" cy="227.9" rx="2.0" ry="0.5" transform="rotate(114 340.8 227.9)"/><ellipse cx="339.4" cy="229.9" rx="2.5" ry="0.4" transform="rotate(75 339.4 229.9)"/><ellipse cx="339.7" cy="231.3" rx="1.2" ry="0.7" transform="rotate(86 339.7 231.3)"/><ellipse cx="405.4" cy="226.2" rx="2.5" ry="0.5" transform="rotate(86 405.4 226.2)"/><ellipse cx="406.1" cy="229.8" rx="0.5" ry="0.7" transform="rotate(5 406.1 229.8)"/><ellipse cx="404.0" cy="224.6" rx="0.5" ry="0.4" transform="rotate(121 404.0 224.6)"/><ellipse cx="404.8" cy="226.7" rx="0.7" ry="0.5" transform="rotate(59 404.8 226.7)"/><ellipse cx="462.5" cy="226.2" rx="0.5" ry="0.5" transform="rotate(49 462.5 226.2)"/><ellipse cx="463.2" cy="225.7" rx="0.5" ry="0.4" transform="rotate(121 463.2 225.7)"/><ellipse cx="464.5" cy="224.8" rx="1.2" ry="0.5" transform="rotate(136 464.5 224.8)"/><ellipse cx="464.2" cy="224.7" rx="0.9" ry="0.4" transform="rotate(177 464.2 224.7)"/><ellipse cx="464.6" cy="226.8" rx="2.0" ry="0.5" transform="rotate(48 464.6 226.8)"/><ellipse cx="466.9" cy="225.5" rx="1.5" ry="0.5" transform="rotate(40 466.9 225.5)"/><ellipse cx="460.2" cy="223.5" rx="1.5" ry="0.7" transform="rotate(27 460.2 223.5)"/><ellipse cx="371.8" cy="218.1" rx="0.5" ry="0.4" transform="rotate(122 371.8 218.1)"/><ellipse cx="376.5" cy="217.9" rx="1.2" ry="0.4" transform="rotate(81 376.5 217.9)"/><ellipse cx="372.5" cy="219.8" rx="0.7" ry="0.7" transform="rotate(145 372.5 219.8)"/><ellipse cx="375.9" cy="220.1" rx="0.5" ry="0.7" transform="rotate(4 375.9 220.1)"/><ellipse cx="410.2" cy="218.9" rx="2.5" ry="0.4" transform="rotate(85 410.2 218.9)"/><ellipse cx="413.4" cy="222.4" rx="1.5" ry="0.4" transform="rotate(110 413.4 222.4)"/><ellipse cx="407.5" cy="221.7" rx="1.2" ry="0.5" transform="rotate(20 407.5 221.7)"/><ellipse cx="447.6" cy="335.8" rx="1.2" ry="0.5" transform="rotate(49 447.6 335.8)"/><ellipse cx="447.0" cy="333.7" rx="1.2" ry="0.7" transform="rotate(38 447.0 333.7)"/><ellipse cx="452.3" cy="338.9" rx="0.7" ry="0.4" transform="rotate(22 452.3 338.9)"/><ellipse cx="449.1" cy="334.2" rx="0.5" ry="0.7" transform="rotate(158 449.1 334.2)"/><ellipse cx="448.3" cy="336.8" rx="0.5" ry="0.4" transform="rotate(3 448.3 336.8)"/><ellipse cx="362.0" cy="327.8" rx="0.7" ry="0.4" transform="rotate(69 362.0 327.8)"/><ellipse cx="359.0" cy="328.4" rx="1.5" ry="0.4" transform="rotate(124 359.0 328.4)"/><ellipse cx="427.7" cy="338.3" rx="2.0" ry="0.7" transform="rotate(176 427.7 338.3)"/><ellipse cx="429.5" cy="338.1" rx="1.2" ry="0.7" transform="rotate(30 429.5 338.1)"/><ellipse cx="456.2" cy="335.8" rx="0.7" ry="0.7" transform="rotate(171 456.2 335.8)"/><ellipse cx="458.6" cy="332.0" rx="2.5" ry="0.4" transform="rotate(175 458.6 332.0)"/><ellipse cx="455.5" cy="338.4" rx="0.5" ry="0.7" transform="rotate(23 455.5 338.4)"/><ellipse cx="454.8" cy="335.7" rx="0.5" ry="0.5" transform="rotate(170 454.8 335.7)"/><ellipse cx="455.6" cy="336.6" rx="2.5" ry="0.5" transform="rotate(140 455.6 336.6)"/><ellipse cx="370.4" cy="336.2" rx="0.7" ry="0.5" transform="rotate(151 370.4 336.2)"/><ellipse cx="371.9" cy="335.2" rx="0.7" ry="0.7" transform="rotate(118 371.9 335.2)"/><ellipse cx="369.0" cy="336.4" rx="0.9" ry="0.5" transform="rotate(41 369.0 336.4)"/><ellipse cx="370.8" cy="338.0" rx="2.0" ry="0.5" transform="rotate(132 370.8 338.0)"/><ellipse cx="355.0" cy="327.1" rx="1.5" ry="0.7" transform="rotate(156 355.0 327.1)"/><ellipse cx="352.2" cy="328.8" rx="2.5" ry="0.5" transform="rotate(127 352.2 328.8)"/><ellipse cx="413.8" cy="323.2" rx="0.5" ry="0.7" transform="rotate(130 413.8 323.2)"/><ellipse cx="414.6" cy="325.5" rx="2.5" ry="0.4" transform="rotate(180 414.6 325.5)"/><ellipse cx="411.0" cy="327.7" rx="0.5" ry="0.4" transform="rotate(65 411.0 327.7)"/><ellipse cx="412.7" cy="323.7" rx="0.9" ry="0.4" transform="rotate(18 412.7 323.7)"/><ellipse cx="413.5" cy="324.7" rx="0.7" ry="0.7" transform="rotate(14 413.5 324.7)"/><ellipse cx="432.8" cy="339.5" rx="0.5" ry="0.4" transform="rotate(166 432.8 339.5)"/><ellipse cx="432.7" cy="336.9" rx="0.9" ry="0.7" transform="rotate(104 432.7 336.9)"/><ellipse cx="431.2" cy="339.2" rx="0.5" ry="0.5" transform="rotate(51 431.2 339.2)"/><ellipse cx="439.4" cy="342.8" rx="0.7" ry="0.7" transform="rotate(165 439.4 342.8)"/><ellipse cx="441.3" cy="343.7" rx="0.9" ry="0.4" transform="rotate(91 441.3 343.7)"/><ellipse cx="444.6" cy="341.4" rx="0.9" ry="0.5" transform="rotate(149 444.6 341.4)"/><ellipse cx="442.4" cy="341.0" rx="2.0" ry="0.5" transform="rotate(14 442.4 341.0)"/><ellipse cx="442.0" cy="340.6" rx="2.5" ry="0.4" transform="rotate(124 442.0 340.6)"/><ellipse cx="453.3" cy="336.4" rx="2.5" ry="0.7" transform="rotate(109 453.3 336.4)"/><ellipse cx="449.6" cy="339.4" rx="0.9" ry="0.4" transform="rotate(5 449.6 339.4)"/><ellipse cx="453.4" cy="336.7" rx="0.5" ry="0.5" transform="rotate(90 453.4 336.7)"/><ellipse cx="433.2" cy="326.2" rx="0.7" ry="0.4" transform="rotate(166 433.2 326.2)"/><ellipse cx="435.4" cy="325.1" rx="0.7" ry="0.5" transform="rotate(18 435.4 325.1)"/><ellipse cx="434.9" cy="325.4" rx="1.5" ry="0.5" transform="rotate(160 434.9 325.4)"/><ellipse cx="433.3" cy="326.7" rx="0.9" ry="0.4" transform="rotate(113 433.3 326.7)"/><ellipse cx="386.7" cy="339.8" rx="2.0" ry="0.7" transform="rotate(32 386.7 339.8)"/><ellipse cx="387.2" cy="337.2" rx="2.0" ry="0.4" transform="rotate(177 387.2 337.2)"/><ellipse cx="385.1" cy="337.4" rx="2.5" ry="0.4" transform="rotate(31 385.1 337.4)"/><ellipse cx="385.0" cy="339.1" rx="0.5" ry="0.5" transform="rotate(177 385.0 339.1)"/><ellipse cx="445.8" cy="326.7" rx="1.2" ry="0.7" transform="rotate(180 445.8 326.7)"/><ellipse cx="450.3" cy="324.1" rx="2.0" ry="0.4" transform="rotate(24 450.3 324.1)"/><ellipse cx="445.9" cy="324.5" rx="0.7" ry="0.4" transform="rotate(129 445.9 324.5)"/><ellipse cx="448.7" cy="325.2" rx="0.7" ry="0.4" transform="rotate(97 448.7 325.2)"/><ellipse cx="427.8" cy="337.8" rx="2.5" ry="0.7" transform="rotate(167 427.8 337.8)"/><ellipse cx="426.3" cy="338.2" rx="0.9" ry="0.5" transform="rotate(83 426.3 338.2)"/><ellipse cx="429.7" cy="335.9" rx="0.9" ry="0.7" transform="rotate(11 429.7 335.9)"/><ellipse cx="426.1" cy="337.7" rx="0.5" ry="0.7" transform="rotate(47 426.1 337.7)"/><ellipse cx="426.7" cy="338.1" rx="2.5" ry="0.7" transform="rotate(131 426.7 338.1)"/><ellipse cx="469.8" cy="329.9" rx="1.2" ry="0.5" transform="rotate(55 469.8 329.9)"/><ellipse cx="471.4" cy="331.1" rx="2.5" ry="0.4" transform="rotate(5 471.4 331.1)"/><ellipse cx="470.9" cy="331.7" rx="1.5" ry="0.7" transform="rotate(13 470.9 331.7)"/><ellipse cx="439.1" cy="332.2" rx="1.2" ry="0.4" transform="rotate(99 439.1 332.2)"/><ellipse cx="439.0" cy="334.1" rx="1.2" ry="0.4" transform="rotate(60 439.0 334.1)"/><ellipse cx="438.4" cy="332.3" rx="0.9" ry="0.5" transform="rotate(104 438.4 332.3)"/><ellipse cx="440.6" cy="333.4" rx="1.2" ry="0.7" transform="rotate(121 440.6 333.4)"/><ellipse cx="443.5" cy="334.1" rx="1.5" ry="0.5" transform="rotate(98 443.5 334.1)"/><ellipse cx="346.6" cy="334.8" rx="2.0" ry="0.7" transform="rotate(64 346.6 334.8)"/><ellipse cx="348.7" cy="333.0" rx="1.5" ry="0.5" transform="rotate(34 348.7 333.0)"/><ellipse cx="350.1" cy="335.7" rx="2.0" ry="0.5" transform="rotate(104 350.1 335.7)"/><ellipse cx="343.7" cy="334.5" rx="0.5" ry="0.5" transform="rotate(56 343.7 334.5)"/><ellipse cx="341.1" cy="334.8" rx="0.9" ry="0.5" transform="rotate(140 341.1 334.8)"/><ellipse cx="346.8" cy="332.1" rx="0.7" ry="0.4" transform="rotate(102 346.8 332.1)"/><ellipse cx="344.8" cy="336.1" rx="1.5" ry="0.4" transform="rotate(118 344.8 336.1)"/><ellipse cx="341.9" cy="331.8" rx="2.0" ry="0.7" transform="rotate(91 341.9 331.8)"/><ellipse cx="426.6" cy="327.3" rx="0.5" ry="0.7" transform="rotate(16 426.6 327.3)"/><ellipse cx="430.3" cy="329.6" rx="0.7" ry="0.5" transform="rotate(38 430.3 329.6)"/><ellipse cx="427.3" cy="329.1" rx="1.2" ry="0.5" transform="rotate(152 427.3 329.1)"/><ellipse cx="429.0" cy="327.8" rx="2.5" ry="0.4" transform="rotate(31 429.0 327.8)"/><ellipse cx="460.6" cy="338.6" rx="0.5" ry="0.4" transform="rotate(31 460.6 338.6)"/><ellipse cx="459.6" cy="336.5" rx="0.9" ry="0.7" transform="rotate(131 459.6 336.5)"/><ellipse cx="461.0" cy="334.6" rx="1.5" ry="0.7" transform="rotate(65 461.0 334.6)"/><ellipse cx="461.5" cy="336.0" rx="0.9" ry="0.7" transform="rotate(158 461.5 336.0)"/><ellipse cx="461.0" cy="336.9" rx="2.5" ry="0.7" transform="rotate(63 461.0 336.9)"/><ellipse cx="384.0" cy="329.6" rx="1.5" ry="0.4" transform="rotate(36 384.0 329.6)"/><ellipse cx="382.7" cy="330.1" rx="2.5" ry="0.7" transform="rotate(54 382.7 330.1)"/><ellipse cx="384.6" cy="327.4" rx="0.9" ry="0.4" transform="rotate(80 384.6 327.4)"/><ellipse cx="349.5" cy="333.4" rx="0.7" ry="0.5" transform="rotate(44 349.5 333.4)"/><ellipse cx="347.8" cy="333.2" rx="0.7" ry="0.4" transform="rotate(166 347.8 333.2)"/><ellipse cx="349.5" cy="330.7" rx="1.2" ry="0.5" transform="rotate(91 349.5 330.7)"/><ellipse cx="346.5" cy="332.5" rx="2.5" ry="0.7" transform="rotate(146 346.5 332.5)"/><ellipse cx="346.8" cy="334.0" rx="2.5" ry="0.7" transform="rotate(148 346.8 334.0)"/><ellipse cx="459.9" cy="325.3" rx="0.9" ry="0.7" transform="rotate(166 459.9 325.3)"/><ellipse cx="459.7" cy="325.5" rx="2.0" ry="0.4" transform="rotate(179 459.7 325.5)"/><ellipse cx="376.2" cy="332.2" rx="1.2" ry="0.4" transform="rotate(114 376.2 332.2)"/><ellipse cx="375.0" cy="332.2" rx="2.0" ry="0.4" transform="rotate(141 375.0 332.2)"/><ellipse cx="375.1" cy="332.9" rx="0.7" ry="0.4" transform="rotate(88 375.1 332.9)"/><ellipse cx="439.0" cy="331.3" rx="2.5" ry="0.4" transform="rotate(35 439.0 331.3)"/><ellipse cx="442.6" cy="331.0" rx="1.2" ry="0.4" transform="rotate(63 442.6 331.0)"/><ellipse cx="386.4" cy="331.4" rx="2.0" ry="0.5" transform="rotate(126 386.4 331.4)"/><ellipse cx="386.2" cy="329.9" rx="0.7" ry="0.7" transform="rotate(141 386.2 329.9)"/><ellipse cx="386.5" cy="329.4" rx="0.5" ry="0.5" transform="rotate(48 386.5 329.4)"/><ellipse cx="384.7" cy="330.5" rx="0.5" ry="0.4" transform="rotate(172 384.7 330.5)"/><ellipse cx="382.0" cy="332.4" rx="2.0" ry="0.4" transform="rotate(114 382.0 332.4)"/><ellipse cx="379.7" cy="331.9" rx="2.5" ry="0.5" transform="rotate(27 379.7 331.9)"/><ellipse cx="382.3" cy="333.7" rx="0.9" ry="0.4" transform="rotate(125 382.3 333.7)"/><ellipse cx="379.5" cy="332.7" rx="1.5" ry="0.5" transform="rotate(105 379.5 332.7)"/><ellipse cx="384.2" cy="335.4" rx="1.5" ry="0.5" transform="rotate(53 384.2 335.4)"/><ellipse cx="404.3" cy="332.3" rx="1.5" ry="0.5" transform="rotate(176 404.3 332.3)"/><ellipse cx="402.3" cy="333.1" rx="0.5" ry="0.5" transform="rotate(34 402.3 333.1)"/><ellipse cx="402.6" cy="329.9" rx="2.5" ry="0.4" transform="rotate(4 402.6 329.9)"/><ellipse cx="354.2" cy="331.6" rx="0.9" ry="0.5" transform="rotate(76 354.2 331.6)"/><ellipse cx="355.5" cy="330.9" rx="1.5" ry="0.5" transform="rotate(10 355.5 330.9)"/><ellipse cx="355.4" cy="329.8" rx="0.9" ry="0.5" transform="rotate(128 355.4 329.8)"/><ellipse cx="438.6" cy="328.8" rx="1.2" ry="0.5" transform="rotate(171 438.6 328.8)"/><ellipse cx="437.8" cy="328.1" rx="0.7" ry="0.5" transform="rotate(28 437.8 328.1)"/><ellipse cx="439.4" cy="327.7" rx="2.5" ry="0.4" transform="rotate(92 439.4 327.7)"/><ellipse cx="473.3" cy="409.0" rx="1.5" ry="0.7" transform="rotate(74 473.3 409.0)"/><ellipse cx="474.6" cy="409.1" rx="0.9" ry="0.5" transform="rotate(91 474.6 409.1)"/><ellipse cx="465.6" cy="416.3" rx="0.9" ry="0.4" transform="rotate(145 465.6 416.3)"/><ellipse cx="466.6" cy="416.3" rx="0.9" ry="0.5" transform="rotate(163 466.6 416.3)"/><ellipse cx="466.5" cy="414.6" rx="2.0" ry="0.5" transform="rotate(107 466.5 414.6)"/><ellipse cx="463.4" cy="418.6" rx="2.5" ry="0.7" transform="rotate(124 463.4 418.6)"/><ellipse cx="458.0" cy="374.6" rx="1.5" ry="0.7" transform="rotate(53 458.0 374.6)"/><ellipse cx="459.7" cy="377.8" rx="2.0" ry="0.5" transform="rotate(119 459.7 377.8)"/><ellipse cx="455.9" cy="433.3" rx="0.9" ry="0.5" transform="rotate(115 455.9 433.3)"/><ellipse cx="458.3" cy="434.7" rx="0.5" ry="0.7" transform="rotate(174 458.3 434.7)"/><ellipse cx="457.8" cy="433.7" rx="0.7" ry="0.5" transform="rotate(143 457.8 433.7)"/><ellipse cx="458.8" cy="433.9" rx="0.7" ry="0.5" transform="rotate(164 458.8 433.9)"/><ellipse cx="459.2" cy="433.7" rx="1.5" ry="0.7" transform="rotate(127 459.2 433.7)"/><ellipse cx="465.8" cy="425.7" rx="1.5" ry="0.7" transform="rotate(100 465.8 425.7)"/><ellipse cx="465.2" cy="422.1" rx="2.5" ry="0.5" transform="rotate(155 465.2 422.1)"/><ellipse cx="466.2" cy="419.9" rx="1.2" ry="0.4" transform="rotate(35 466.2 419.9)"/><ellipse cx="466.9" cy="420.5" rx="2.0" ry="0.7" transform="rotate(132 466.9 420.5)"/><ellipse cx="466.2" cy="419.7" rx="2.0" ry="0.7" transform="rotate(156 466.2 419.7)"/><ellipse cx="465.1" cy="421.3" rx="0.7" ry="0.7" transform="rotate(165 465.1 421.3)"/><ellipse cx="467.6" cy="418.4" rx="2.0" ry="0.7" transform="rotate(9 467.6 418.4)"/><ellipse cx="460.8" cy="393.6" rx="2.0" ry="0.5" transform="rotate(91 460.8 393.6)"/><ellipse cx="460.2" cy="390.3" rx="0.5" ry="0.4" transform="rotate(35 460.2 390.3)"/><ellipse cx="463.5" cy="392.6" rx="1.2" ry="0.5" transform="rotate(22 463.5 392.6)"/><ellipse cx="463.5" cy="390.0" rx="0.7" ry="0.7" transform="rotate(46 463.5 390.0)"/><ellipse cx="460.1" cy="392.0" rx="1.5" ry="0.7" transform="rotate(139 460.1 392.0)"/><ellipse cx="457.6" cy="440.1" rx="1.2" ry="0.7" transform="rotate(39 457.6 440.1)"/><ellipse cx="456.9" cy="442.6" rx="0.5" ry="0.7" transform="rotate(77 456.9 442.6)"/><ellipse cx="455.7" cy="438.5" rx="2.0" ry="0.5" transform="rotate(72 455.7 438.5)"/><ellipse cx="456.4" cy="441.5" rx="0.9" ry="0.5" transform="rotate(48 456.4 441.5)"/><ellipse cx="458.9" cy="440.8" rx="2.0" ry="0.7" transform="rotate(169 458.9 440.8)"/><ellipse cx="465.3" cy="448.3" rx="0.5" ry="0.4" transform="rotate(20 465.3 448.3)"/><ellipse cx="461.9" cy="448.0" rx="0.5" ry="0.4" transform="rotate(104 461.9 448.0)"/><ellipse cx="462.3" cy="448.3" rx="0.5" ry="0.5" transform="rotate(139 462.3 448.3)"/><ellipse cx="461.4" cy="452.1" rx="2.0" ry="0.5" transform="rotate(19 461.4 452.1)"/><ellipse cx="460.7" cy="462.2" rx="2.5" ry="0.5" transform="rotate(169 460.7 462.2)"/><ellipse cx="461.6" cy="465.5" rx="2.0" ry="0.5" transform="rotate(19 461.6 465.5)"/><ellipse cx="461.8" cy="336.0" rx="0.9" ry="0.7" transform="rotate(83 461.8 336.0)"/><ellipse cx="465.6" cy="334.2" rx="0.7" ry="0.7" transform="rotate(85 465.6 334.2)"/><ellipse cx="462.7" cy="334.9" rx="0.9" ry="0.7" transform="rotate(46 462.7 334.9)"/><ellipse cx="462.6" cy="334.6" rx="1.5" ry="0.5" transform="rotate(162 462.6 334.6)"/><ellipse cx="460.4" cy="334.4" rx="2.0" ry="0.4" transform="rotate(176 460.4 334.4)"/><ellipse cx="475.1" cy="330.7" rx="2.5" ry="0.4" transform="rotate(53 475.1 330.7)"/><ellipse cx="475.4" cy="329.9" rx="2.0" ry="0.4" transform="rotate(64 475.4 329.9)"/><ellipse cx="475.7" cy="327.0" rx="1.5" ry="0.5" transform="rotate(14 475.7 327.0)"/><ellipse cx="459.1" cy="441.5" rx="0.7" ry="0.4" transform="rotate(119 459.1 441.5)"/><ellipse cx="458.4" cy="442.3" rx="0.5" ry="0.5" transform="rotate(170 458.4 442.3)"/><ellipse cx="455.2" cy="360.7" rx="0.5" ry="0.4" transform="rotate(161 455.2 360.7)"/><ellipse cx="455.9" cy="359.9" rx="2.5" ry="0.4" transform="rotate(133 455.9 359.9)"/><ellipse cx="456.0" cy="357.5" rx="0.5" ry="0.4" transform="rotate(138 456.0 357.5)"/><ellipse cx="456.5" cy="359.5" rx="2.0" ry="0.5" transform="rotate(100 456.5 359.5)"/><ellipse cx="458.8" cy="358.2" rx="2.5" ry="0.4" transform="rotate(96 458.8 358.2)"/><ellipse cx="451.4" cy="456.8" rx="0.5" ry="0.7" transform="rotate(140 451.4 456.8)"/><ellipse cx="454.5" cy="454.9" rx="0.9" ry="0.7" transform="rotate(37 454.5 454.9)"/><ellipse cx="455.8" cy="455.4" rx="1.2" ry="0.5" transform="rotate(28 455.8 455.4)"/><ellipse cx="464.4" cy="346.4" rx="2.0" ry="0.7" transform="rotate(61 464.4 346.4)"/><ellipse cx="464.8" cy="347.2" rx="1.5" ry="0.4" transform="rotate(43 464.8 347.2)"/><ellipse cx="464.6" cy="348.0" rx="0.9" ry="0.7" transform="rotate(13 464.6 348.0)"/><ellipse cx="464.3" cy="347.3" rx="0.7" ry="0.7" transform="rotate(22 464.3 347.3)"/><ellipse cx="467.2" cy="348.6" rx="0.7" ry="0.4" transform="rotate(72 467.2 348.6)"/><ellipse cx="463.1" cy="464.8" rx="1.2" ry="0.7" transform="rotate(170 463.1 464.8)"/><ellipse cx="461.7" cy="463.1" rx="2.0" ry="0.5" transform="rotate(151 461.7 463.1)"/><ellipse cx="466.5" cy="335.4" rx="2.0" ry="0.4" transform="rotate(145 466.5 335.4)"/><ellipse cx="465.2" cy="333.1" rx="0.7" ry="0.7" transform="rotate(169 465.2 333.1)"/><ellipse cx="468.7" cy="332.7" rx="2.5" ry="0.7" transform="rotate(50 468.7 332.7)"/><ellipse cx="450.7" cy="354.6" rx="1.5" ry="0.5" transform="rotate(158 450.7 354.6)"/><ellipse cx="450.7" cy="352.8" rx="1.5" ry="0.7" transform="rotate(37 450.7 352.8)"/><ellipse cx="455.2" cy="388.0" rx="0.7" ry="0.5" transform="rotate(22 455.2 388.0)"/><ellipse cx="452.3" cy="389.2" rx="0.5" ry="0.4" transform="rotate(153 452.3 389.2)"/><ellipse cx="455.8" cy="386.4" rx="0.9" ry="0.4" transform="rotate(66 455.8 386.4)"/><ellipse cx="452.8" cy="389.2" rx="1.5" ry="0.4" transform="rotate(102 452.8 389.2)"/><ellipse cx="452.2" cy="379.8" rx="2.5" ry="0.4" transform="rotate(75 452.2 379.8)"/><ellipse cx="453.6" cy="378.6" rx="1.2" ry="0.7" transform="rotate(165 453.6 378.6)"/><ellipse cx="452.7" cy="377.1" rx="0.7" ry="0.5" transform="rotate(40 452.7 377.1)"/><ellipse cx="463.1" cy="433.3" rx="2.5" ry="0.4" transform="rotate(158 463.1 433.3)"/><ellipse cx="465.2" cy="432.7" rx="2.5" ry="0.4" transform="rotate(51 465.2 432.7)"/><ellipse cx="461.0" cy="432.7" rx="0.7" ry="0.4" transform="rotate(173 461.0 432.7)"/><ellipse cx="461.1" cy="432.8" rx="0.5" ry="0.4" transform="rotate(63 461.1 432.8)"/><ellipse cx="457.0" cy="475.6" rx="0.9" ry="0.5" transform="rotate(4 457.0 475.6)"/><ellipse cx="456.6" cy="476.3" rx="0.9" ry="0.4" transform="rotate(180 456.6 476.3)"/><ellipse cx="448.8" cy="342.2" rx="0.9" ry="0.4" transform="rotate(60 448.8 342.2)"/><ellipse cx="450.1" cy="342.4" rx="1.5" ry="0.4" transform="rotate(158 450.1 342.4)"/><ellipse cx="447.6" cy="343.2" rx="0.5" ry="0.7" transform="rotate(89 447.6 343.2)"/><ellipse cx="447.5" cy="342.4" rx="2.0" ry="0.7" transform="rotate(104 447.5 342.4)"/><ellipse cx="450.5" cy="340.3" rx="2.0" ry="0.7" transform="rotate(100 450.5 340.3)"/><ellipse cx="472.5" cy="447.2" rx="0.9" ry="0.7" transform="rotate(152 472.5 447.2)"/><ellipse cx="470.7" cy="446.2" rx="1.2" ry="0.4" transform="rotate(138 470.7 446.2)"/><ellipse cx="471.9" cy="446.8" rx="1.5" ry="0.4" transform="rotate(106 471.9 446.8)"/><ellipse cx="472.3" cy="448.8" rx="1.5" ry="0.4" transform="rotate(158 472.3 448.8)"/><ellipse cx="468.9" cy="341.1" rx="0.5" ry="0.5" transform="rotate(69 468.9 341.1)"/><ellipse cx="465.2" cy="340.8" rx="0.5" ry="0.4" transform="rotate(58 465.2 340.8)"/><ellipse cx="448.7" cy="444.7" rx="0.5" ry="0.5" transform="rotate(156 448.7 444.7)"/><ellipse cx="450.7" cy="444.4" rx="2.0" ry="0.7" transform="rotate(151 450.7 444.4)"/><ellipse cx="449.8" cy="444.5" rx="0.5" ry="0.7" transform="rotate(94 449.8 444.5)"/><ellipse cx="466.3" cy="360.1" rx="0.9" ry="0.4" transform="rotate(91 466.3 360.1)"/><ellipse cx="466.7" cy="364.7" rx="1.5" ry="0.5" transform="rotate(24 466.7 364.7)"/><ellipse cx="461.9" cy="362.3" rx="0.9" ry="0.4" transform="rotate(102 461.9 362.3)"/><ellipse cx="463.4" cy="361.0" rx="2.5" ry="0.5" transform="rotate(168 463.4 361.0)"/><ellipse cx="463.9" cy="361.4" rx="0.9" ry="0.5" transform="rotate(176 463.9 361.4)"/><ellipse cx="460.4" cy="348.8" rx="2.5" ry="0.5" transform="rotate(57 460.4 348.8)"/><ellipse cx="461.2" cy="348.9" rx="0.5" ry="0.5" transform="rotate(22 461.2 348.9)"/><ellipse cx="458.8" cy="352.1" rx="1.2" ry="0.4" transform="rotate(80 458.8 352.1)"/><ellipse cx="459.8" cy="351.7" rx="2.5" ry="0.7" transform="rotate(32 459.8 351.7)"/><ellipse cx="461.0" cy="458.3" rx="0.5" ry="0.4" transform="rotate(101 461.0 458.3)"/><ellipse cx="458.3" cy="456.6" rx="0.9" ry="0.7" transform="rotate(141 458.3 456.6)"/><ellipse cx="472.1" cy="376.7" rx="2.5" ry="0.7" transform="rotate(71 472.1 376.7)"/><ellipse cx="471.5" cy="380.4" rx="2.5" ry="0.5" transform="rotate(130 471.5 380.4)"/><ellipse cx="468.5" cy="456.7" rx="2.0" ry="0.5" transform="rotate(8 468.5 456.7)"/><ellipse cx="466.6" cy="459.4" rx="1.2" ry="0.4" transform="rotate(47 466.6 459.4)"/><ellipse cx="466.5" cy="457.2" rx="0.7" ry="0.4" transform="rotate(98 466.5 457.2)"/><ellipse cx="455.5" cy="447.3" rx="0.7" ry="0.7" transform="rotate(35 455.5 447.3)"/><ellipse cx="455.1" cy="446.8" rx="2.5" ry="0.4" transform="rotate(7 455.1 446.8)"/><ellipse cx="458.7" cy="433.6" rx="0.7" ry="0.4" transform="rotate(159 458.7 433.6)"/><ellipse cx="456.8" cy="434.1" rx="2.0" ry="0.5" transform="rotate(126 456.8 434.1)"/><ellipse cx="460.1" cy="432.9" rx="2.0" ry="0.7" transform="rotate(53 460.1 432.9)"/><ellipse cx="459.5" cy="431.3" rx="0.5" ry="0.5" transform="rotate(131 459.5 431.3)"/><ellipse cx="457.0" cy="434.1" rx="1.5" ry="0.4" transform="rotate(59 457.0 434.1)"/><ellipse cx="460.4" cy="379.9" rx="0.5" ry="0.7" transform="rotate(158 460.4 379.9)"/><ellipse cx="459.8" cy="380.1" rx="0.5" ry="0.7" transform="rotate(121 459.8 380.1)"/><ellipse cx="461.5" cy="378.5" rx="0.7" ry="0.5" transform="rotate(150 461.5 378.5)"/><ellipse cx="472.6" cy="369.7" rx="0.5" ry="0.7" transform="rotate(143 472.6 369.7)"/><ellipse cx="476.5" cy="371.4" rx="2.5" ry="0.5" transform="rotate(176 476.5 371.4)"/><ellipse cx="474.4" cy="370.4" rx="0.9" ry="0.5" transform="rotate(166 474.4 370.4)"/><ellipse cx="473.2" cy="371.4" rx="0.9" ry="0.4" transform="rotate(67 473.2 371.4)"/><ellipse cx="464.8" cy="423.7" rx="0.9" ry="0.5" transform="rotate(131 464.8 423.7)"/><ellipse cx="464.5" cy="425.9" rx="2.5" ry="0.7" transform="rotate(164 464.5 425.9)"/><ellipse cx="463.6" cy="426.3" rx="0.9" ry="0.4" transform="rotate(110 463.6 426.3)"/><ellipse cx="462.7" cy="424.0" rx="0.7" ry="0.4" transform="rotate(60 462.7 424.0)"/><ellipse cx="464.1" cy="324.5" rx="2.0" ry="0.5" transform="rotate(100 464.1 324.5)"/><ellipse cx="465.9" cy="326.4" rx="2.5" ry="0.4" transform="rotate(174 465.9 326.4)"/><ellipse cx="461.1" cy="338.9" rx="0.9" ry="0.4" transform="rotate(23 461.1 338.9)"/><ellipse cx="466.8" cy="339.7" rx="0.9" ry="0.4" transform="rotate(97 466.8 339.7)"/><ellipse cx="466.4" cy="341.2" rx="2.5" ry="0.4" transform="rotate(57 466.4 341.2)"/><ellipse cx="464.8" cy="341.8" rx="2.5" ry="0.5" transform="rotate(133 464.8 341.8)"/><ellipse cx="463.7" cy="388.4" rx="1.5" ry="0.5" transform="rotate(169 463.7 388.4)"/><ellipse cx="464.3" cy="390.1" rx="0.5" ry="0.4" transform="rotate(76 464.3 390.1)"/><ellipse cx="462.0" cy="388.7" rx="0.5" ry="0.5" transform="rotate(111 462.0 388.7)"/><ellipse cx="464.6" cy="385.8" rx="2.5" ry="0.4" transform="rotate(132 464.6 385.8)"/><ellipse cx="468.1" cy="354.8" rx="1.5" ry="0.4" transform="rotate(170 468.1 354.8)"/><ellipse cx="469.7" cy="356.2" rx="0.7" ry="0.5" transform="rotate(80 469.7 356.2)"/><ellipse cx="471.6" cy="355.8" rx="2.5" ry="0.7" transform="rotate(150 471.6 355.8)"/><ellipse cx="471.4" cy="356.0" rx="1.2" ry="0.7" transform="rotate(6 471.4 356.0)"/><ellipse cx="473.3" cy="354.6" rx="0.5" ry="0.4" transform="rotate(69 473.3 354.6)"/><ellipse cx="459.1" cy="338.4" rx="1.5" ry="0.5" transform="rotate(142 459.1 338.4)"/><ellipse cx="457.9" cy="338.7" rx="2.5" ry="0.4" transform="rotate(46 457.9 338.7)"/><ellipse cx="457.1" cy="340.6" rx="1.2" ry="0.7" transform="rotate(35 457.1 340.6)"/><ellipse cx="460.1" cy="413.4" rx="1.2" ry="0.4" transform="rotate(11 460.1 413.4)"/><ellipse cx="462.8" cy="410.8" rx="2.0" ry="0.5" transform="rotate(20 462.8 410.8)"/><ellipse cx="460.2" cy="408.7" rx="1.5" ry="0.7" transform="rotate(34 460.2 408.7)"/><ellipse cx="462.0" cy="431.5" rx="1.5" ry="0.5" transform="rotate(125 462.0 431.5)"/><ellipse cx="464.4" cy="432.1" rx="2.5" ry="0.7" transform="rotate(143 464.4 432.1)"/><ellipse cx="460.9" cy="419.7" rx="0.5" ry="0.7" transform="rotate(123 460.9 419.7)"/><ellipse cx="462.2" cy="417.0" rx="0.5" ry="0.5" transform="rotate(46 462.2 417.0)"/><ellipse cx="460.0" cy="416.7" rx="2.5" ry="0.5" transform="rotate(31 460.0 416.7)"/><ellipse cx="395.5" cy="323.2" rx="0.5" ry="0.5" transform="rotate(34 395.5 323.2)"/><ellipse cx="396.0" cy="324.4" rx="0.5" ry="0.7" transform="rotate(176 396.0 324.4)"/><ellipse cx="397.5" cy="322.6" rx="1.2" ry="0.4" transform="rotate(92 397.5 322.6)"/><ellipse cx="399.0" cy="323.9" rx="0.7" ry="0.5" transform="rotate(173 399.0 323.9)"/><ellipse cx="446.8" cy="306.5" rx="0.5" ry="0.7" transform="rotate(134 446.8 306.5)"/><ellipse cx="439.8" cy="304.5" rx="2.5" ry="0.7" transform="rotate(177 439.8 304.5)"/><ellipse cx="397.9" cy="305.4" rx="1.5" ry="0.7" transform="rotate(152 397.9 305.4)"/><ellipse cx="398.6" cy="302.3" rx="0.5" ry="0.4" transform="rotate(79 398.6 302.3)"/><ellipse cx="397.9" cy="304.9" rx="1.2" ry="0.5" transform="rotate(27 397.9 304.9)"/><ellipse cx="401.5" cy="304.2" rx="0.9" ry="0.4" transform="rotate(135 401.5 304.2)"/><ellipse cx="362.1" cy="325.2" rx="1.5" ry="0.4" transform="rotate(152 362.1 325.2)"/><ellipse cx="360.9" cy="325.2" rx="1.2" ry="0.4" transform="rotate(37 360.9 325.2)"/><ellipse cx="409.7" cy="300.2" rx="0.5" ry="0.7" transform="rotate(65 409.7 300.2)"/><ellipse cx="407.2" cy="300.7" rx="2.5" ry="0.7" transform="rotate(133 407.2 300.7)"/><ellipse cx="408.9" cy="301.9" rx="1.5" ry="0.7" transform="rotate(60 408.9 301.9)"/><ellipse cx="407.3" cy="302.0" rx="0.5" ry="0.4" transform="rotate(112 407.3 302.0)"/><ellipse cx="416.1" cy="327.2" rx="0.7" ry="0.4" transform="rotate(177 416.1 327.2)"/><ellipse cx="414.6" cy="325.3" rx="1.2" ry="0.7" transform="rotate(161 414.6 325.3)"/><ellipse cx="418.3" cy="326.3" rx="1.2" ry="0.4" transform="rotate(151 418.3 326.3)"/><ellipse cx="416.0" cy="329.9" rx="2.5" ry="0.5" transform="rotate(98 416.0 329.9)"/><ellipse cx="428.5" cy="316.5" rx="1.5" ry="0.5" transform="rotate(98 428.5 316.5)"/><ellipse cx="427.6" cy="318.1" rx="1.5" ry="0.7" transform="rotate(133 427.6 318.1)"/><ellipse cx="469.3" cy="322.7" rx="2.0" ry="0.5" transform="rotate(17 469.3 322.7)"/><ellipse cx="468.6" cy="323.7" rx="0.5" ry="0.7" transform="rotate(166 468.6 323.7)"/><ellipse cx="465.9" cy="321.7" rx="1.5" ry="0.5" transform="rotate(72 465.9 321.7)"/><ellipse cx="467.7" cy="321.1" rx="1.5" ry="0.7" transform="rotate(12 467.7 321.1)"/><ellipse cx="430.0" cy="296.3" rx="2.0" ry="0.4" transform="rotate(47 430.0 296.3)"/><ellipse cx="430.9" cy="296.5" rx="2.0" ry="0.5" transform="rotate(36 430.9 296.5)"/><ellipse cx="431.3" cy="296.3" rx="0.7" ry="0.4" transform="rotate(142 431.3 296.3)"/><ellipse cx="388.7" cy="296.3" rx="2.0" ry="0.4" transform="rotate(116 388.7 296.3)"/><ellipse cx="387.7" cy="296.7" rx="0.9" ry="0.7" transform="rotate(115 387.7 296.7)"/><ellipse cx="382.7" cy="310.7" rx="1.5" ry="0.5" transform="rotate(5 382.7 310.7)"/><ellipse cx="378.2" cy="309.6" rx="2.0" ry="0.4" transform="rotate(64 378.2 309.6)"/><ellipse cx="377.9" cy="310.5" rx="2.0" ry="0.5" transform="rotate(134 377.9 310.5)"/><ellipse cx="439.9" cy="294.7" rx="2.0" ry="0.7" transform="rotate(108 439.9 294.7)"/><ellipse cx="439.3" cy="292.1" rx="0.9" ry="0.7" transform="rotate(94 439.3 292.1)"/><ellipse cx="445.9" cy="267.3" rx="0.7" ry="0.7" transform="rotate(34 445.9 267.3)"/><ellipse cx="419.8" cy="279.0" rx="1.5" ry="0.4" transform="rotate(88 419.8 279.0)"/><ellipse cx="420.3" cy="277.8" rx="2.5" ry="0.4" transform="rotate(132 420.3 277.8)"/><ellipse cx="402.2" cy="297.9" rx="0.5" ry="0.4" transform="rotate(31 402.2 297.9)"/><ellipse cx="350.5" cy="256.6" rx="0.7" ry="0.7" transform="rotate(121 350.5 256.6)"/><ellipse cx="351.8" cy="254.7" rx="1.2" ry="0.4" transform="rotate(136 351.8 254.7)"/><ellipse cx="351.2" cy="253.7" rx="2.0" ry="0.4" transform="rotate(42 351.2 253.7)"/><ellipse cx="455.9" cy="315.7" rx="0.5" ry="0.5" transform="rotate(121 455.9 315.7)"/><ellipse cx="457.5" cy="313.7" rx="2.0" ry="0.5" transform="rotate(19 457.5 313.7)"/><ellipse cx="443.1" cy="290.0" rx="0.5" ry="0.4" transform="rotate(47 443.1 290.0)"/><ellipse cx="444.6" cy="291.3" rx="1.5" ry="0.7" transform="rotate(84 444.6 291.3)"/><ellipse cx="442.0" cy="293.7" rx="2.0" ry="0.5" transform="rotate(42 442.0 293.7)"/><ellipse cx="445.0" cy="291.1" rx="0.5" ry="0.4" transform="rotate(79 445.0 291.1)"/><ellipse cx="450.9" cy="262.8" rx="0.9" ry="0.4" transform="rotate(91 450.9 262.8)"/><ellipse cx="442.1" cy="286.6" rx="0.9" ry="0.4" transform="rotate(108 442.1 286.6)"/><ellipse cx="445.7" cy="288.4" rx="1.5" ry="0.5" transform="rotate(164 445.7 288.4)"/></g><path transform="translate(0,0)" d="M544.3 210.7 A43.2 43.2 0 1 0 543 271.3 L543 241 L532 241 L532 266.2 A32.2 32.2 0 1 1 536.6 217.8 Z" fill="#3f4b5e"/><path transform="translate(0,0)" fill-rule="evenodd" d="M558.1 239.9 a43.25 43.25 0 1 0 86.5 0 a43.25 43.25 0 1 0 -86.5 0 Z M568.65 239.9 a32.7 32.7 0 1 0 65.4 0 a32.7 32.7 0 1 0 -65.4 0 Z" fill="#3f4b5e"/><path transform="translate(0,0)" fill-rule="evenodd" d="M658.0 239.9 a43.25 43.25 0 1 0 86.5 0 a43.25 43.25 0 1 0 -86.5 0 Z M668.55 239.9 a32.7 32.7 0 1 0 65.4 0 a32.7 32.7 0 1 0 -65.4 0 Z" fill="#3f4b5e"/><path transform="translate(0,388.7)" d="M544.3 210.7 A43.2 43.2 0 1 0 543 271.3 L543 241 L532 241 L532 266.2 A32.2 32.2 0 1 1 536.6 217.8 Z" fill="#3f4b5e"/><path transform="translate(0,388.7)" fill-rule="evenodd" d="M558.1 239.9 a43.25 43.25 0 1 0 86.5 0 a43.25 43.25 0 1 0 -86.5 0 Z M568.65 239.9 a32.7 32.7 0 1 0 65.4 0 a32.7 32.7 0 1 0 -65.4 0 Z" fill="#3f4b5e"/><path transform="translate(0,388.7)" fill-rule="evenodd" d="M658.0 239.9 a43.25 43.25 0 1 0 86.5 0 a43.25 43.25 0 1 0 -86.5 0 Z M668.55 239.9 a32.7 32.7 0 1 0 65.4 0 a32.7 32.7 0 1 0 -65.4 0 Z" fill="#3f4b5e"/><path fill-rule="evenodd" fill="#3f4b5e" d="M561.4 314.3 L597.6 412.2 L586.4 412.2 L582.8 401.5 L539 401.5 L535.2 412.2 L525.2 412.2 Z M561.4 338.4 L580.9 394 L541.9 394 Z"/><path fill="#3f4b5e" d="M561.4 359.7 L565.1 370 L554.9 386.6 L551.2 386.6 Z"/><path fill="#3f4b5e" d="M570.7 318.9 L574 318.9 L607.8 412.2 L605 412.2 Z"/><path fill-rule="evenodd" fill="#3f4b5e" d="M616.3 318.5 L626 318.5 A38.75 38.75 0 0 1 646.7 390.4 L657.6 408.9 L651.4 413 L638.6 394.2 Q632 396.4 626 396.4 L624.1 396.4 L624.1 411.6 L616.3 411.6 Z M624.1 325.3 L626 325.3 A31.1 31.1 0 0 1 626 387.5 L624.1 387.5 Z"/><path fill="#3f4b5e" d="M632 335 L638.7 337 L636.5 379 L632 379 Z"/><path fill="#3f4b5e" d="M632 403.1 L635.5 403.1 L635.2 411.6 L632 411.6 Z"/><path fill="none" stroke="#3f4b5e" stroke-width="2.6" d="M652 318.8 A45.5 45.5 0 0 1 657.5 391.5 L670 409"/><path fill="none" stroke="#3f4b5e" stroke-width="2.6" d="M657.4 415.8 L670 409"/><clipPath id="starclip"><path d="M414 519.8 L449 507.3 L465.5 541 L503.5 542.6 L435 566.5 L435 541.8 Z"/></clipPath><g clip-path="url(#starclip)" stroke="#3f4b5e" stroke-width="1.15"><line x1="433.58" y1="431.95" x2="554.33" y2="536.92"/><line x1="431.94" y1="433.84" x2="552.69" y2="538.81"/><line x1="429.18" y1="437.01" x2="549.94" y2="541.98"/><line x1="427.54" y1="438.89" x2="548.30" y2="543.86"/><line x1="424.79" y1="442.06" x2="545.54" y2="547.03"/><line x1="423.15" y1="443.95" x2="543.90" y2="548.92"/><line x1="420.39" y1="447.12" x2="541.15" y2="552.09"/><line x1="418.75" y1="449.01" x2="539.51" y2="553.98"/><line x1="416.00" y1="452.18" x2="536.75" y2="557.15"/><line x1="414.36" y1="454.06" x2="535.11" y2="559.03"/><line x1="411.60" y1="457.23" x2="532.35" y2="562.20"/><line x1="409.96" y1="459.12" x2="530.71" y2="564.09"/><line x1="407.21" y1="462.29" x2="527.96" y2="567.26"/><line x1="405.57" y1="464.18" x2="526.32" y2="569.15"/><line x1="402.81" y1="467.35" x2="523.56" y2="572.32"/><line x1="401.17" y1="469.23" x2="521.92" y2="574.20"/><line x1="398.41" y1="472.40" x2="519.17" y2="577.37"/><line x1="396.77" y1="474.29" x2="517.53" y2="579.26"/><line x1="394.02" y1="477.46" x2="514.77" y2="582.43"/><line x1="392.38" y1="479.35" x2="513.13" y2="584.31"/><line x1="389.62" y1="482.52" x2="510.38" y2="587.48"/><line x1="387.98" y1="484.40" x2="508.74" y2="589.37"/><line x1="385.23" y1="487.57" x2="505.98" y2="592.54"/><line x1="383.59" y1="489.46" x2="504.34" y2="594.43"/><line x1="380.83" y1="492.63" x2="501.59" y2="597.60"/><line x1="379.19" y1="494.52" x2="499.95" y2="599.48"/><line x1="376.44" y1="497.68" x2="497.19" y2="602.65"/><line x1="374.80" y1="499.57" x2="495.55" y2="604.54"/><line x1="372.04" y1="502.74" x2="492.79" y2="607.71"/><line x1="370.40" y1="504.63" x2="491.15" y2="609.60"/><line x1="367.65" y1="507.80" x2="488.40" y2="612.77"/><line x1="366.01" y1="509.68" x2="486.76" y2="614.65"/><line x1="363.25" y1="512.85" x2="484.00" y2="617.82"/><line x1="361.61" y1="514.74" x2="482.36" y2="619.71"/><line x1="358.85" y1="517.91" x2="479.61" y2="622.88"/><line x1="357.21" y1="519.80" x2="477.97" y2="624.77"/><line x1="354.46" y1="522.97" x2="475.21" y2="627.94"/><line x1="352.82" y1="524.85" x2="473.57" y2="629.82"/><line x1="350.06" y1="528.02" x2="470.82" y2="632.99"/><line x1="348.42" y1="529.91" x2="469.18" y2="634.88"/></g><path fill="#3f4b5e" d="M455.7 487.4 A525.7 525.7 0 0 1 700 467.3 L700 517.2 A620 620 0 0 0 469.7 536.2 Z"/><text x="561.5 577.5 608.5 634.5 661.5 678" y="500" font-family="Liberation Serif" font-style="italic" font-size="56" transform="translate(562,0) scale(0.85,1) translate(-562,0)" fill="#fde3cc" stroke="#fde3cc" stroke-width="1.8">inspir</text><text x="561.5 577.5 608.5 634.5 661.5 678" y="500" font-family="Liberation Serif" font-style="italic" font-size="56" transform="translate(562,0) scale(0.85,1) translate(-562,0)" fill="none" stroke="#4d7cf5" stroke-width="0.35" opacity="0.8">inspir</text><text x="561.5 577.5 608.5 634.5 661.5 678" y="500" font-family="Liberation Serif" font-style="italic" font-size="56" transform="translate(562,0) scale(0.85,1) translate(-562,0)" fill="none" stroke="#4d7cf5" stroke-width="2.4" stroke-linecap="round" stroke-dasharray="0 15">inspir</text><circle cx="569.6" cy="466.8" r="3.3" fill="#fde3cc" stroke="#4d7cf5" stroke-width="1.3" stroke-dasharray="1.6 0.8"/><circle cx="656.2" cy="466.8" r="3.3" fill="#fde3cc" stroke="#4d7cf5" stroke-width="1.3" stroke-dasharray="1.6 0.8"/><rect x="560.2" y="463.2" width="166" height="49.3" fill="none" stroke="#4d7cf5" stroke-width="0.9"/><rect x="558.6" y="461.59999999999997" width="3.2" height="3.2" fill="#fff" stroke="#4d7cf5" stroke-width="0.9"/><rect x="641.6999999999999" y="461.59999999999997" width="3.2" height="3.2" fill="#fff" stroke="#4d7cf5" stroke-width="0.9"/><rect x="558.6" y="486.29999999999995" width="3.2" height="3.2" fill="#fff" stroke="#4d7cf5" stroke-width="0.9"/><rect x="558.6" y="510.9" width="3.2" height="3.2" fill="#fff" stroke="#4d7cf5" stroke-width="0.9"/><rect x="641.6999999999999" y="510.9" width="3.2" height="3.2" fill="#fff" stroke="#4d7cf5" stroke-width="0.9"/></svg>
</div>
<div style="position:absolute;left:0;top:607px;width:670px;height:11.5px;background:#535353"></div>
<div style="position:absolute;left:303.5px;top:607px;width:367px;height:11.5px;background:#333"></div>
<div style="position:absolute;left:0;top:618.5px;width:670px;height:1.5px;background:#5a4a4a"></div>
<div style="position:absolute;left:1.5px;top:608px;width:30px;height:10.5px;background:#b9b9b9"></div>
<div class="t m" style="left:4.7px;top:605.69px;font-size:8.4px;line-height:16px;color:#111;">100%</div>
<div style="position:absolute;left:31.6px;top:608px;width:10.7px;height:10.5px;background:#4a4a4a"></div>
<svg style="position:absolute;left:34px;top:611.5px" width="6" height="4"><path d="M0 0H6L3 3.5Z" fill="#d8d8d8"/></svg>
<svg style="position:absolute;left:48px;top:609px" width="20" height="8"><path d="M1 1V7" stroke="#777" stroke-width="1"/><path d="M6 1V7L2 4Z" fill="#777"/><path d="M18 1V7L14 4Z" fill="#777"/></svg>
<div style="position:absolute;left:73.7px;top:608px;width:30px;height:10.5px;background:#b9b9b9"></div>
<div class="t m" style="left:76px;top:605.69px;font-size:8.4px;line-height:16px;color:#111;">1</div>
<div style="position:absolute;left:103.6px;top:608px;width:10.4px;height:10.5px;background:#4a4a4a"></div>
<svg style="position:absolute;left:106px;top:611.5px" width="6" height="4"><path d="M0 0H6L3 3.5Z" fill="#d8d8d8"/></svg>
<svg style="position:absolute;left:121px;top:609px" width="20" height="8"><path d="M1 1V7L5 4Z" fill="#777"/><path d="M12 1V7L16 4Z" fill="#777"/><path d="M17 1V7" stroke="#777" stroke-width="1"/></svg>
<div style="position:absolute;left:145px;top:608px;width:1px;height:10px;background:#444"></div>
<div class="t m" style="left:203px;top:605.56px;font-size:8.2px;line-height:16px;color:#d8d8d8;">Selection</div>
<div style="position:absolute;left:289.8px;top:607px;width:13.7px;height:11.5px;background:#5a5a5a"></div>
<svg style="position:absolute;left:294.5px;top:610px" width="5" height="7"><path d="M0 0V6L4.5 3Z" fill="#d8d8d8"/></svg>
<svg style="position:absolute;left:306.5px;top:610px" width="6" height="7"><path d="M5 0V6L0.5 3Z" fill="#e8e8e8"/></svg>
<div style="position:absolute;left:667px;top:607px;width:3px;height:11.5px;background:#999"></div>
<div style="position:absolute;left:25px;top:18px;width:201.6px;height:473px;background:#f0f0f0;border:1px solid #979797;box-sizing:border-box;box-shadow:2px 2px 2px rgba(0,0,0,0.35)"></div>
<div style="position:absolute;left:26px;top:19px;width:199.6px;height:471px;border:1px solid #fcfcfc;box-sizing:border-box"></div>
<div style="position:absolute;left:45.5px;top:20px;width:1px;height:469px;background:#e2e3e3;border-right:1px solid #fff"></div>
<div class="t m" style="left:50.6px;top:20.43px;font-size:10.0px;line-height:16px;color:#000;">Transform</div>
<svg style="position:absolute;left:214.8px;top:25.30px" width="4" height="6"><path d="M0 0V5.6L2.9 2.8Z" fill="#111"/></svg>
<div class="t m" style="left:50.6px;top:36.33px;font-size:10.0px;line-height:16px;color:#000;">Arrange</div>
<svg style="position:absolute;left:214.8px;top:41.20px" width="4" height="6"><path d="M0 0V5.6L2.9 2.8Z" fill="#111"/></svg>
<div style="position:absolute;left:48px;top:54.20px;width:177px;height:1px;background:#d7d7d7;border-bottom:1px solid #fff"></div>
<div class="t m" style="left:50.6px;top:56.83px;font-size:10.0px;line-height:16px;color:#000;">Group</div>
<div class="t m mr" style="right:458.2px;top:56.83px;font-size:10.0px;line-height:16px;color:#000;">Ctrl+G</div>
<div class="t m" style="left:50.6px;top:72.73px;font-size:10.0px;line-height:16px;color:#000;">Ungroup</div>
<div class="t m mr" style="right:458.2px;top:72.73px;font-size:10.0px;line-height:16px;color:#000;">Shift+Ctrl+G</div>
<div class="t m" style="left:50.6px;top:88.64px;font-size:10.0px;line-height:16px;color:#000;">Lock</div>
<svg style="position:absolute;left:214.8px;top:93.50px" width="4" height="6"><path d="M0 0V5.6L2.9 2.8Z" fill="#111"/></svg>
<div class="t m" style="left:50.6px;top:104.54px;font-size:10.0px;line-height:16px;color:#6d6d6d;">Unlock All</div>
<div class="t m mr" style="right:458.2px;top:104.54px;font-size:10.0px;line-height:16px;color:#6d6d6d;">Alt+Ctrl+2</div>
<div class="t m" style="left:50.6px;top:120.44px;font-size:10.0px;line-height:16px;color:#000;">Hide</div>
<svg style="position:absolute;left:214.8px;top:125.30px" width="4" height="6"><path d="M0 0V5.6L2.9 2.8Z" fill="#111"/></svg>
<div class="t m" style="left:50.6px;top:136.34px;font-size:10.0px;line-height:16px;color:#6d6d6d;">Show All</div>
<div class="t m mr" style="right:458.2px;top:136.34px;font-size:10.0px;line-height:16px;color:#6d6d6d;">Alt+Ctrl+3</div>
<div style="position:absolute;left:48px;top:154.20px;width:177px;height:1px;background:#d7d7d7;border-bottom:1px solid #fff"></div>
<div class="t m" style="left:50.6px;top:156.84px;font-size:10.0px;line-height:16px;color:#000;">Expand...</div>
<div class="t m" style="left:50.6px;top:172.74px;font-size:10.0px;line-height:16px;color:#6d6d6d;">Expand Appearance</div>
<div class="t m" style="left:50.6px;top:188.64px;font-size:10.0px;line-height:16px;color:#000;">Rasterize...</div>
<div class="t m" style="left:50.6px;top:204.54px;font-size:10.0px;line-height:16px;color:#6d6d6d;">Create Gradient Mesh...</div>
<div class="t m" style="left:50.6px;top:220.44px;font-size:10.0px;line-height:16px;color:#6d6d6d;">Create Object Mosaic...</div>
<div class="t m" style="left:50.6px;top:236.34px;font-size:10.0px;line-height:16px;color:#000;">Flatten Transparency...</div>
<div style="position:absolute;left:48px;top:254.20px;width:177px;height:1px;background:#d7d7d7;border-bottom:1px solid #fff"></div>
<div class="t m" style="left:50.6px;top:256.84px;font-size:10.0px;line-height:16px;color:#000;">Slice</div>
<svg style="position:absolute;left:214.8px;top:261.70px" width="4" height="6"><path d="M0 0V5.6L2.9 2.8Z" fill="#111"/></svg>
<div class="t m" style="left:50.6px;top:272.74px;font-size:10.0px;line-height:16px;color:#000;">Create Trim Marks</div>
<div style="position:absolute;left:48px;top:290.60px;width:177px;height:1px;background:#d7d7d7;border-bottom:1px solid #fff"></div>
<div class="t m" style="left:50.6px;top:293.24px;font-size:10.0px;line-height:16px;color:#000;">Path</div>
<svg style="position:absolute;left:214.8px;top:298.10px" width="4" height="6"><path d="M0 0V5.6L2.9 2.8Z" fill="#111"/></svg>
<div class="t m" style="left:50.6px;top:309.14px;font-size:10.0px;line-height:16px;color:#000;">Pattern</div>
<svg style="position:absolute;left:214.8px;top:314.00px" width="4" height="6"><path d="M0 0V5.6L2.9 2.8Z" fill="#111"/></svg>
<div class="t m" style="left:50.6px;top:325.04px;font-size:10.0px;line-height:16px;color:#000;">Blend</div>
<svg style="position:absolute;left:214.8px;top:329.90px" width="4" height="6"><path d="M0 0V5.6L2.9 2.8Z" fill="#111"/></svg>
<div style="position:absolute;left:27.2px;top:341px;width:195.5px;height:15.9px;background:#d1e2f2;border:1px solid #a3c5ea;box-sizing:border-box;border-radius:1px"></div>
<div class="t m" style="left:50.6px;top:340.94px;font-size:10.0px;line-height:16px;color:#000;">Envelope Distort</div>
<svg style="position:absolute;left:214.8px;top:345.80px" width="4" height="6"><path d="M0 0V5.6L2.9 2.8Z" fill="#111"/></svg>
<div class="t m" style="left:50.6px;top:356.83px;font-size:10.0px;line-height:16px;color:#000;">Perspective</div>
<svg style="position:absolute;left:214.8px;top:361.70px" width="4" height="6"><path d="M0 0V5.6L2.9 2.8Z" fill="#111"/></svg>
<div class="t m" style="left:50.6px;top:372.73px;font-size:10.0px;line-height:16px;color:#000;">Live Paint</div>
<svg style="position:absolute;left:214.8px;top:377.60px" width="4" height="6"><path d="M0 0V5.6L2.9 2.8Z" fill="#111"/></svg>
<div class="t m" style="left:50.6px;top:388.63px;font-size:10.0px;line-height:16px;color:#000;">Image Trace</div>
<svg style="position:absolute;left:214.8px;top:393.50px" width="4" height="6"><path d="M0 0V5.6L2.9 2.8Z" fill="#111"/></svg>
<div class="t m" style="left:50.6px;top:404.53px;font-size:10.0px;line-height:16px;color:#000;">Text Wrap</div>
<svg style="position:absolute;left:214.8px;top:409.40px" width="4" height="6"><path d="M0 0V5.6L2.9 2.8Z" fill="#111"/></svg>
<div style="position:absolute;left:48px;top:422.40px;width:177px;height:1px;background:#d7d7d7;border-bottom:1px solid #fff"></div>
<div class="t m" style="left:50.6px;top:425.03px;font-size:10.0px;line-height:16px;color:#000;">Clipping Mask</div>
<svg style="position:absolute;left:214.8px;top:429.90px" width="4" height="6"><path d="M0 0V5.6L2.9 2.8Z" fill="#111"/></svg>
<div class="t m" style="left:50.6px;top:440.93px;font-size:10.0px;line-height:16px;color:#000;">Compound Path</div>
<svg style="position:absolute;left:214.8px;top:445.80px" width="4" height="6"><path d="M0 0V5.6L2.9 2.8Z" fill="#111"/></svg>
<div class="t m" style="left:50.6px;top:456.83px;font-size:10.0px;line-height:16px;color:#000;">Artboards</div>
<svg style="position:absolute;left:214.8px;top:461.70px" width="4" height="6"><path d="M0 0V5.6L2.9 2.8Z" fill="#111"/></svg>
<div class="t m" style="left:50.6px;top:472.73px;font-size:10.0px;line-height:16px;color:#000;">Graph</div>
<svg style="position:absolute;left:214.8px;top:477.60px" width="4" height="6"><path d="M0 0V5.6L2.9 2.8Z" fill="#111"/></svg>
<div style="position:absolute;left:223px;top:339.3px;width:217.7px;height:130.3px;background:#f0f0f0;border:1px solid #979797;box-sizing:border-box;box-shadow:2px 2px 2px rgba(0,0,0,0.35)"></div>
<div style="position:absolute;left:224px;top:340.3px;width:215.7px;height:128.3px;border:1px solid #fcfcfc;box-sizing:border-box"></div>
<div style="position:absolute;left:244px;top:341.3px;width:1px;height:126.30000000000001px;background:#e2e3e3;border-right:1px solid #fff"></div>
<div style="position:absolute;left:225px;top:341px;width:213.5px;height:15.9px;background:#d1e2f2;border:1px solid #a3c5ea;box-sizing:border-box;border-radius:1px"></div>
<div class="t m" style="left:248.1px;top:341.44px;font-size:10.0px;line-height:16px;color:#000;">Make with Warp...</div>
<div class="t m mr" style="right:243.8px;top:341.44px;font-size:10.0px;line-height:16px;color:#000;">Alt+Shift+Ctrl+W</div>
<div class="t m" style="left:248.1px;top:357.33px;font-size:10.0px;line-height:16px;color:#000;">Make with Mesh...</div>
<div class="t m mr" style="right:243.8px;top:357.33px;font-size:10.0px;line-height:16px;color:#000;">Alt+Ctrl+M</div>
<div class="t m" style="left:248.1px;top:373.23px;font-size:10.0px;line-height:16px;color:#000;">Make with Top Object</div>
<div class="t m mr" style="right:243.8px;top:373.23px;font-size:10.0px;line-height:16px;color:#000;">Alt+Ctrl+C</div>
<div class="t m" style="left:248.1px;top:389.13px;font-size:10.0px;line-height:16px;color:#6d6d6d;">Release</div>
<div style="position:absolute;left:246px;top:407.00px;width:193px;height:1px;background:#d7d7d7;border-bottom:1px solid #fff"></div>
<div class="t m" style="left:248.1px;top:410.13px;font-size:10.0px;line-height:16px;color:#000;">Envelope Options...</div>
<div style="position:absolute;left:246px;top:428.00px;width:193px;height:1px;background:#d7d7d7;border-bottom:1px solid #fff"></div>
<div class="t m" style="left:248.1px;top:431.13px;font-size:10.0px;line-height:16px;color:#6d6d6d;">Expand</div>
<div style="position:absolute;left:246px;top:449.00px;width:193px;height:1px;background:#d7d7d7;border-bottom:1px solid #fff"></div>
<div class="t m" style="left:248.1px;top:452.13px;font-size:10.0px;line-height:16px;color:#6d6d6d;">Edit Contents</div>
<div class="t m mr" style="right:243.8px;top:452.13px;font-size:10.0px;line-height:16px;color:#6d6d6d;">Shift+Ctrl+P</div>
</body></html>
